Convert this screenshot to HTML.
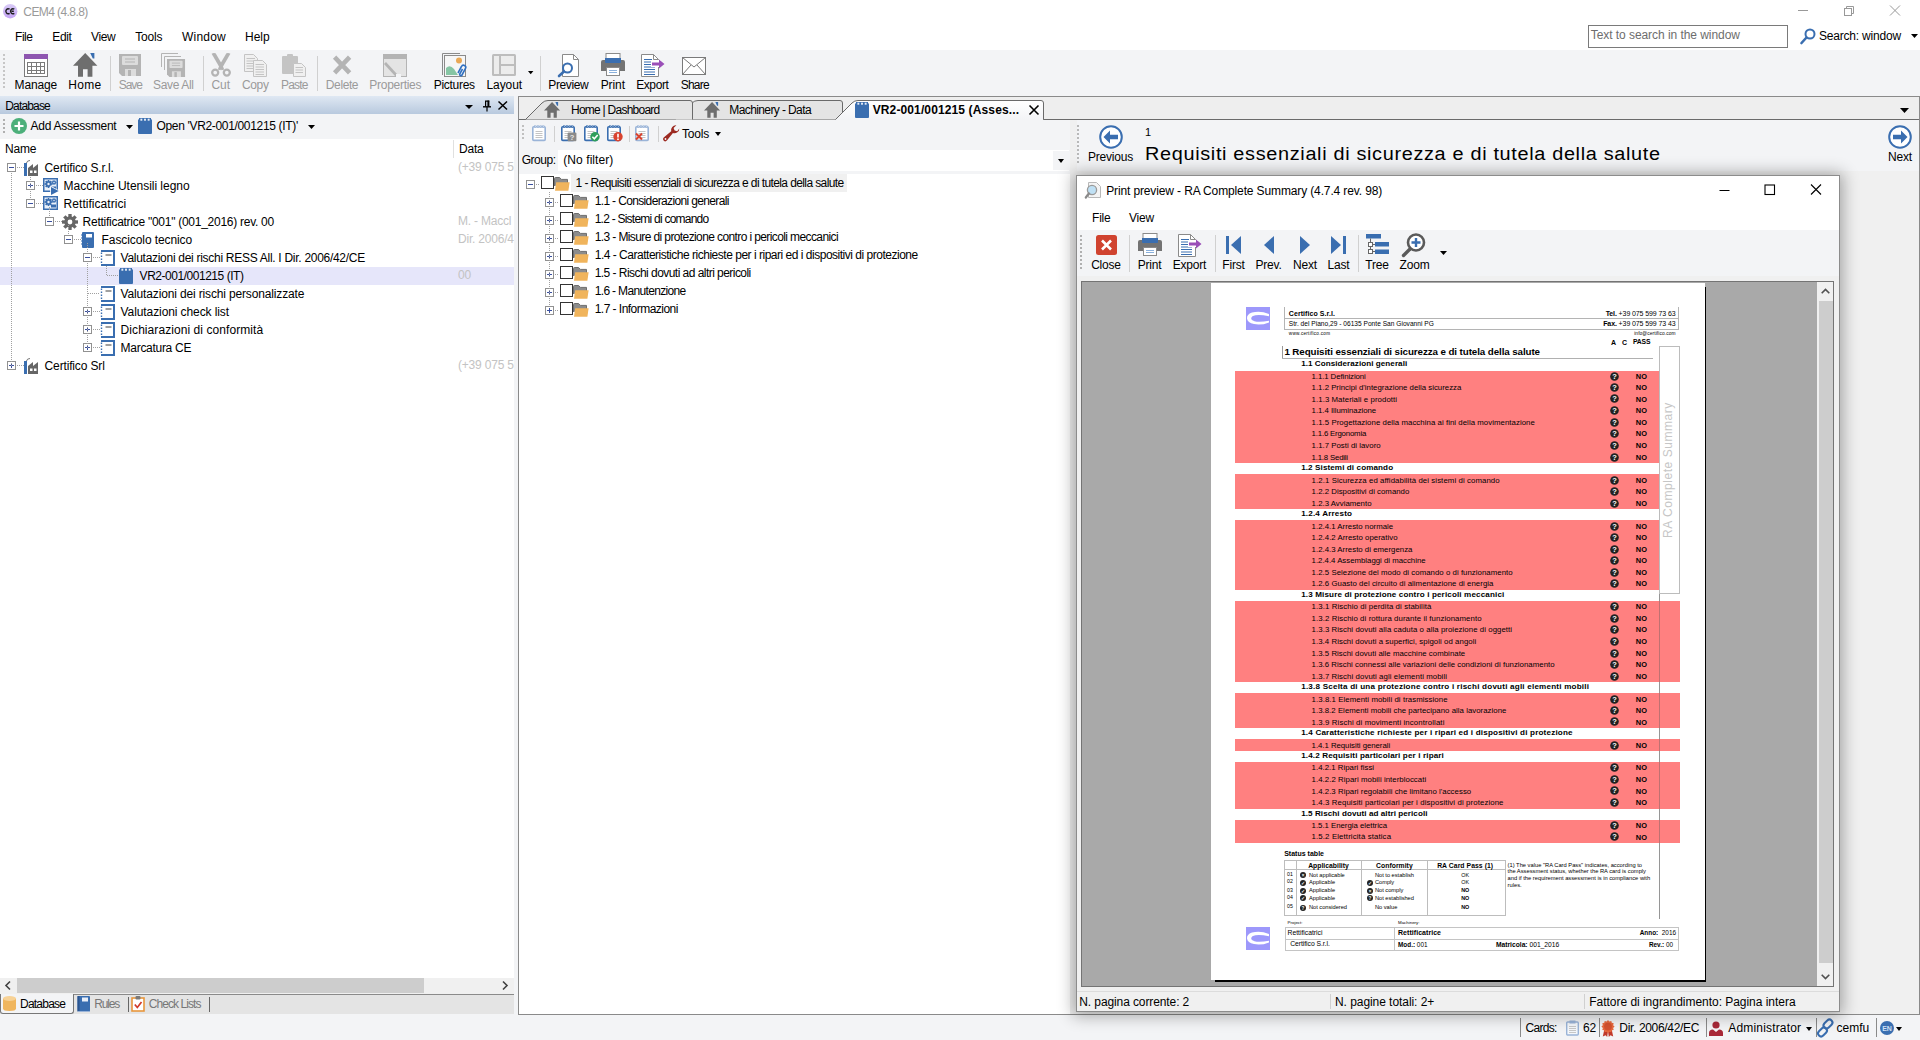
<!DOCTYPE html>
<html><head><meta charset="utf-8"><title>CEM4</title>
<style>
html,body{margin:0;padding:0;}
body{width:1920px;height:1040px;overflow:hidden;position:relative;background:#f3f4f6;font-family:"Liberation Sans", sans-serif;font-size:12px;}
div,span.t,svg{position:absolute;}
span.t{white-space:nowrap;display:block;}
svg{overflow:visible;}
</style></head><body>
<div style="left:0px;top:0px;width:1920px;height:50px;background:#fff"></div>
<svg style="left:2.9px;top:3.6px" width="15" height="15" viewBox="0 0 15 15"><defs><linearGradient id="ga" x1="0" y1="0" x2="0" y2="1"><stop offset="0" stop-color="#d8caf6"/><stop offset="1" stop-color="#c4a4f4"/></linearGradient></defs><circle cx="7.2" cy="7.2" r="7.2" fill="url(#ga)"/><path d="M6.6 5.1 A2.5 2.5 0 1 0 6.6 9.4" fill="none" stroke="#1c1c1c" stroke-width="1.5"/><path d="M11.3 5.1 A2.5 2.5 0 1 0 11.3 9.4 M8.6 7.25 H10.8" fill="none" stroke="#1c1c1c" stroke-width="1.5"/></svg>
<span class="t" style="left:23.3px;top:4.0px;height:17px;line-height:17px;font-size:12px;color:#9a9a9a;letter-spacing:-0.578px;font-weight:normal;">CEM4 (4.8.8)</span>
<svg style="left:1798px;top:5px" width="110" height="14" viewBox="0 0 110 14"><path d="M0 5.5h10" stroke="#999"/><rect x="46.5" y="3.5" width="7" height="7" fill="#fff" stroke="#999"/><path d="M48.5 3.5v-2h7v7h-2" fill="none" stroke="#999"/><path d="M92 0.5l10 10M102 0.5l-10 10" stroke="#999"/></svg>
<span class="t" style="left:15px;top:28.5px;height:17px;line-height:17px;font-size:12px;color:#000;letter-spacing:-0.448px;font-weight:normal;">File</span>
<span class="t" style="left:52.3px;top:28.5px;height:17px;line-height:17px;font-size:12px;color:#000;letter-spacing:-0.396px;font-weight:normal;">Edit</span>
<span class="t" style="left:91px;top:28.5px;height:17px;line-height:17px;font-size:12px;color:#000;letter-spacing:-0.399px;font-weight:normal;">View</span>
<span class="t" style="left:135.2px;top:28.5px;height:17px;line-height:17px;font-size:12px;color:#000;letter-spacing:-0.204px;font-weight:normal;">Tools</span>
<span class="t" style="left:182px;top:28.5px;height:17px;line-height:17px;font-size:12px;color:#000;letter-spacing:0.222px;font-weight:normal;">Window</span>
<span class="t" style="left:245px;top:28.5px;height:17px;line-height:17px;font-size:12px;color:#000;letter-spacing:0.004px;font-weight:normal;">Help</span>
<div style="left:1588px;top:25px;width:198px;height:21px;border:1px solid #7a7a7a;background:#fff"></div>
<span class="t" style="left:1590.7px;top:26.799999999999997px;height:17px;line-height:17px;font-size:12px;color:#6d6d6d;letter-spacing:-0.054px;font-weight:normal;">Text to search in the window</span>
<svg style="left:1800px;top:28px" width="16" height="17" viewBox="0 0 16 17"><circle cx="10" cy="6" r="4.5" fill="none" stroke="#3a6eb0" stroke-width="2"/><path d="M6.5 9.5 L1.5 15" stroke="#3a6eb0" stroke-width="2.6" stroke-linecap="round"/></svg>
<span class="t" style="left:1819px;top:27.5px;height:17px;line-height:17px;font-size:12px;color:#000;letter-spacing:-0.2px;font-weight:normal;">Search: window</span>
<svg style="left:1911px;top:34px" width="7" height="4" viewBox="0 0 7 4"><path d="M0 0h7l-3.5 4z" fill="#000"/></svg>
<div style="left:0px;top:50px;width:1920px;height:46px;background:#f3f4f6"></div>
<svg style="left:3px;top:54px" width="2" height="36" viewBox="0 0 2 36"><rect x="0" y="0" width="2" height="2" fill="#c6c6c6"/><rect x="0" y="4" width="2" height="2" fill="#c6c6c6"/><rect x="0" y="8" width="2" height="2" fill="#c6c6c6"/><rect x="0" y="12" width="2" height="2" fill="#c6c6c6"/><rect x="0" y="16" width="2" height="2" fill="#c6c6c6"/><rect x="0" y="20" width="2" height="2" fill="#c6c6c6"/><rect x="0" y="24" width="2" height="2" fill="#c6c6c6"/><rect x="0" y="28" width="2" height="2" fill="#c6c6c6"/><rect x="0" y="32" width="2" height="2" fill="#c6c6c6"/></svg>
<svg style="left:24px;top:54px" width="24" height="23" viewBox="0 0 24 23"><rect x="0.5" y="0.5" width="23" height="22" fill="#fff" stroke="#7a7a7a"/><rect x="0" y="0" width="24" height="5" fill="#8e56b0"/><g stroke="#7a7a7a" stroke-width="1" fill="none"><rect x="3.5" y="8.5" width="17" height="11"/><path d="M3.5 12.5h17M3.5 16.5h17M7.5 8.5v11M12.5 8.5v11M16.5 8.5v11"/></g></svg>
<span class="t" style="left:-64.2px;width:200px;text-align:center;top:76.5px;height:17px;line-height:17px;font-size:12px;color:#000;letter-spacing:-0.135px;font-weight:normal;">Manage</span>
<svg style="left:73px;top:53px" width="24" height="23" viewBox="0 0 24 23"><g transform="scale(1.0)"><path d="M12.2 0 L0 12.8 H5 V23.7 H10 V16.2 H14.6 V23.7 H19.4 V12.8 H24.4 Z" fill="#6e6e6e"/><path d="M17.2 0 H21.4 V5.6 H19.8 Z" fill="#3a6eb0"/></g></svg>
<span class="t" style="left:-15.200000000000003px;width:200px;text-align:center;top:76.5px;height:17px;line-height:17px;font-size:12px;color:#000;letter-spacing:0.261px;font-weight:normal;">Home</span>
<div style="left:110px;top:56px;width:1px;height:35px;background:#d0d0d0"></div>
<svg style="left:119px;top:54px" width="22" height="22" viewBox="0 0 22 22"><path d="M0 0 H22 V22 H3 L0 19 Z" fill="#b4b4b4"/><rect x="3" y="2" width="16" height="9" rx="1" fill="#dcdcdc"/><path d="M6 5h10M6 8h10" stroke="#b4b4b4" stroke-width="1"/><rect x="6" y="15" width="11" height="7" fill="#dcdcdc"/><rect x="9" y="16" width="3" height="6" fill="#b4b4b4"/></svg>
<span class="t" style="left:30.30000000000001px;width:200px;text-align:center;top:76.5px;height:17px;line-height:17px;font-size:12px;color:#9a9a9a;letter-spacing:-1.12px;font-weight:normal;">Save</span>
<svg style="left:161px;top:53px" width="24" height="24" viewBox="0 0 24 24"><g fill="none" stroke="#b4b4b4"><path d="M0.5 14 V0.5 H17"/><path d="M3.5 17 V3.5 H20"/></g><g transform="translate(6,6) scale(0.82)"><path d="M0 0 H22 V22 H3 L0 19 Z" fill="#b4b4b4"/><rect x="3" y="2" width="16" height="9" rx="1" fill="#dcdcdc"/><path d="M6 5h10M6 8h10" stroke="#b4b4b4" stroke-width="1"/><rect x="6" y="15" width="11" height="7" fill="#dcdcdc"/><rect x="9" y="16" width="3" height="6" fill="#b4b4b4"/></g></svg>
<span class="t" style="left:73.30000000000001px;width:200px;text-align:center;top:76.5px;height:17px;line-height:17px;font-size:12px;color:#9a9a9a;letter-spacing:-0.366px;font-weight:normal;">Save All</span>
<div style="left:203px;top:56px;width:1px;height:35px;background:#d0d0d0"></div>
<svg style="left:211px;top:53px" width="20" height="23" viewBox="0 0 20 23"><path d="M0.6 0.8 Q2.5 -0.5 4.6 0.3 L11.2 11.5 L13.2 16.5 L10.6 17.2 L8 13.5 Z" fill="#b4b4b4"/><path d="M19.4 0.8 Q17.5 -0.5 15.4 0.3 L8.8 11.5 L6.8 16.5 L9.4 17.2 L12 13.5 Z" fill="#b4b4b4"/><circle cx="4.2" cy="19.6" r="3" fill="none" stroke="#b4b4b4" stroke-width="2.3"/><circle cx="15.8" cy="19.6" r="3" fill="none" stroke="#b4b4b4" stroke-width="2.3"/></svg>
<span class="t" style="left:120.80000000000001px;width:200px;text-align:center;top:76.5px;height:17px;line-height:17px;font-size:12px;color:#9a9a9a;letter-spacing:0.006px;font-weight:normal;">Cut</span>
<svg style="left:244px;top:54px" width="23" height="23" viewBox="0 0 23 23"><path d="M0.5 0.5 H9.5 L13.5 4.5 V17.5 H0.5 Z" fill="#f0f0f0" stroke="#c4c4c4"/><path d="M2.5 4.5 H11" stroke="#c4c4c4" stroke-width="1"/><path d="M2.5 7.0 H11" stroke="#c4c4c4" stroke-width="1"/><path d="M2.5 9.5 H11" stroke="#c4c4c4" stroke-width="1"/><path d="M2.5 12.0 H11" stroke="#c4c4c4" stroke-width="1"/><path d="M2.5 14.5 H11" stroke="#c4c4c4" stroke-width="1"/><path d="M9.5 6.5 H18.5 L22.5 10.5 V22.5 H9.5 Z" fill="#f0f0f0" stroke="#c4c4c4"/><path d="M11.5 10.5 H20" stroke="#c4c4c4" stroke-width="1"/><path d="M11.5 13.0 H20" stroke="#c4c4c4" stroke-width="1"/><path d="M11.5 15.5 H20" stroke="#c4c4c4" stroke-width="1"/><path d="M11.5 18.0 H20" stroke="#c4c4c4" stroke-width="1"/><path d="M11.5 20.5 H20" stroke="#c4c4c4" stroke-width="1"/></svg>
<span class="t" style="left:155.3px;width:200px;text-align:center;top:76.5px;height:17px;line-height:17px;font-size:12px;color:#9a9a9a;letter-spacing:-0.339px;font-weight:normal;">Copy</span>
<svg style="left:282px;top:54px" width="24" height="23" viewBox="0 0 24 23"><rect x="0" y="2" width="16" height="18" rx="1" fill="#c4c4c4"/><rect x="5" y="0" width="6" height="4" rx="1" fill="#c4c4c4"/><path d="M11.5 9.5 H19.5 L23.5 13.5 V22.5 H11.5 Z" fill="#f0f0f0" stroke="#c4c4c4"/><path d="M13.5 13.5 H21" stroke="#c4c4c4" stroke-width="1"/><path d="M13.5 16.0 H21" stroke="#c4c4c4" stroke-width="1"/><path d="M13.5 18.5 H21" stroke="#c4c4c4" stroke-width="1"/></svg>
<span class="t" style="left:194.3px;width:200px;text-align:center;top:76.5px;height:17px;line-height:17px;font-size:12px;color:#9a9a9a;letter-spacing:-0.797px;font-weight:normal;">Paste</span>
<div style="left:317px;top:56px;width:1px;height:35px;background:#d0d0d0"></div>
<svg style="left:332px;top:55px" width="20" height="20" viewBox="0 0 20 20"><path d="M2.6 2.2 L17.6 17.8 M17.6 2.2 L2.6 17.8" stroke="#b4b4b4" stroke-width="4.6" fill="none"/></svg>
<span class="t" style="left:242.0px;width:200px;text-align:center;top:76.5px;height:17px;line-height:17px;font-size:12px;color:#9a9a9a;letter-spacing:-0.397px;font-weight:normal;">Delete</span>
<svg style="left:383px;top:54px" width="24" height="23" viewBox="0 0 24 23"><rect x="0.5" y="0.5" width="23" height="22" fill="#e4e4e4" stroke="#b4b4b4"/><rect x="0" y="0" width="24" height="5" fill="#b4b4b4"/><path d="M1 10 L3 8 L14 20 L15 23 L12 22 Z" fill="#b4b4b4"/><rect x="13" y="20" width="5" height="3" fill="#f3f4f6"/></svg>
<span class="t" style="left:295.3px;width:200px;text-align:center;top:76.5px;height:17px;line-height:17px;font-size:12px;color:#9a9a9a;letter-spacing:-0.278px;font-weight:normal;">Properties</span>
<svg style="left:442px;top:53px" width="24" height="24" viewBox="0 0 24 24"><path d="M0.5 22 V0.5 H18" fill="none" stroke="#8a8a8a"/><rect x="2.5" y="2.5" width="21" height="21" fill="#f6f6f6" stroke="#8a8a8a"/><circle cx="17" cy="7.5" r="3" fill="#e9a855"/><path d="M4 22 V15 Q8 11 12 16 L16 22 Z" fill="#86c5a4"/><g fill="none" stroke="#2f6fc0" stroke-width="1.6"><path d="M16 20 L19.5 13.5 a2.2 2.2 0 0 1 4 2 L20 22 a1.2 1.2 0 0 1 -2.2 -1.2 L20.5 16"/></g></svg>
<span class="t" style="left:354.3px;width:200px;text-align:center;top:76.5px;height:17px;line-height:17px;font-size:12px;color:#000;letter-spacing:-0.28px;font-weight:normal;">Pictures</span>
<svg style="left:492px;top:54px" width="24" height="22" viewBox="0 0 24 22"><rect x="0" y="0" width="24" height="22" rx="1.5" fill="#bdbdbd"/><rect x="2" y="2" width="5" height="18" fill="#ececec"/><rect x="9" y="2" width="13" height="8" fill="#ececec"/><rect x="9" y="12" width="13" height="8" fill="#ececec"/></svg>
<span class="t" style="left:404.3px;width:200px;text-align:center;top:76.5px;height:17px;line-height:17px;font-size:12px;color:#000;letter-spacing:-0.066px;font-weight:normal;">Layout</span>
<svg style="left:528px;top:70.5px" width="5" height="3" viewBox="0 0 5 3"><path d="M0 0h5.4l-2.7 3.2z" fill="#000"/></svg>
<div style="left:540px;top:56px;width:1px;height:35px;background:#d0d0d0"></div>
<svg style="left:558px;top:54px" width="22" height="23" viewBox="0 0 22 23"><path d="M4.5 0.5 H15.5 L20.5 5.5 V22.5 H4.5 Z" fill="#fff" stroke="#8a8a8a"/><path d="M15.5 0.5 V5.5 H20.5" fill="none" stroke="#8a8a8a"/><circle cx="9.5" cy="14" r="4.5" fill="#fff" stroke="#3a6eb0" stroke-width="2"/><path d="M6 17.5 L1 22" stroke="#3a6eb0" stroke-width="2.6" stroke-linecap="round"/></svg>
<span class="t" style="left:468.29999999999995px;width:200px;text-align:center;top:76.5px;height:17px;line-height:17px;font-size:12px;color:#000;letter-spacing:-0.381px;font-weight:normal;">Preview</span>
<svg style="left:601px;top:53px" width="24" height="23" viewBox="0 0 24 23"><rect x="5" y="0.5" width="14" height="7" fill="#fff" stroke="#8a8a8a"/><rect x="4" y="5" width="16" height="5" fill="#3a6eb0"/><path d="M0 9 Q0 7 2 7 H22 Q24 7 24 9 V18 H0 Z" fill="#737373"/><rect x="4" y="6" width="16" height="4" rx="1" fill="#3a6eb0"/><rect x="5.5" y="14.5" width="13" height="8" fill="#fff" stroke="#8a8a8a"/><path d="M8 17.5h8M8 19.5h8" stroke="#8ab0dc"/></svg>
<span class="t" style="left:512.8px;width:200px;text-align:center;top:76.5px;height:17px;line-height:17px;font-size:12px;color:#000;letter-spacing:-0.072px;font-weight:normal;">Print</span>
<svg style="left:641px;top:54px" width="24" height="23" viewBox="0 0 24 23"><path d="M0.5 0.5 H12.5 L17.5 5.5 V22.5 H0.5 Z" fill="#fff" stroke="#8a8a8a"/><path d="M12.5 0.5 V5.5 H17.5" fill="none" stroke="#8a8a8a"/><path d="M3 5.5h8M3 8h11M3 10.5h11M3 13h11M3 15.5h11M3 18h11M3 20.5h11" stroke="#3a6eb0" stroke-width="1"/><rect x="10" y="6" width="10" height="7" fill="#fff"/><path d="M11 8.5 H18 V5.5 L23.5 10 L18 14.5 V11.5 H11 Z" fill="#9a4fb8"/></svg>
<span class="t" style="left:552.3px;width:200px;text-align:center;top:76.5px;height:17px;line-height:17px;font-size:12px;color:#000;letter-spacing:-0.397px;font-weight:normal;">Export</span>
<svg style="left:682px;top:57px" width="24" height="18" viewBox="0 0 24 18"><rect x="0.5" y="0.5" width="23" height="17" fill="#fff" stroke="#7a7a7a"/><path d="M0.5 0.5 L12 10 L23.5 0.5 M0.5 17.5 L9 8 M23.5 17.5 L15 8" fill="none" stroke="#7a7a7a"/></svg>
<span class="t" style="left:594.8px;width:200px;text-align:center;top:76.5px;height:17px;line-height:17px;font-size:12px;color:#000;letter-spacing:-0.758px;font-weight:normal;">Share</span>
<div style="left:0px;top:96px;width:514px;height:18px;background:linear-gradient(#dfe8f3,#b8c9de)"></div>
<span class="t" style="left:5.3px;top:97.5px;height:17px;line-height:17px;font-size:12px;color:#000;letter-spacing:-0.839px;font-weight:normal;">Database</span>
<svg style="left:465px;top:105px" width="8" height="4" viewBox="0 0 8 4"><path d="M0 0h8l-4 4z" fill="#000"/></svg>
<svg style="left:483px;top:100px" width="8" height="12" viewBox="0 0 8 12"><path d="M2 1.2h4.2M2.6 1v5.5" stroke="#000" stroke-width="1.2" fill="none"/><path d="M5.4 0.6v6" stroke="#000" stroke-width="2"/><path d="M0 6.8h8" stroke="#000" stroke-width="1.4"/><path d="M4 7v4.5" stroke="#000" stroke-width="1.2"/></svg>
<svg style="left:498px;top:101px" width="10" height="9" viewBox="0 0 10 9"><path d="M0.5 0.5l8.5 8M9 0.5l-8.5 8" stroke="#000" stroke-width="1.5"/></svg>
<div style="left:0px;top:114px;width:514px;height:25px;background:#f3f4f6"></div>
<svg style="left:3px;top:119px" width="2" height="14" viewBox="0 0 2 14"><rect x="0" y="0" width="2" height="2" fill="#b0b0b0"/><rect x="0" y="4" width="2" height="2" fill="#b0b0b0"/><rect x="0" y="8" width="2" height="2" fill="#b0b0b0"/><rect x="0" y="12" width="2" height="2" fill="#b0b0b0"/></svg>
<svg style="left:11px;top:118px" width="16" height="16" viewBox="0 0 16 16"><circle cx="8" cy="8" r="8" fill="#4caf7a"/><path d="M8 3.5V12.5M3.5 8H12.5" stroke="#fff" stroke-width="2.2"/></svg>
<span class="t" style="left:30.5px;top:117.5px;height:17px;line-height:17px;font-size:12px;color:#000;letter-spacing:-0.245px;font-weight:normal;">Add Assessment</span>
<svg style="left:126px;top:125px" width="7" height="4" viewBox="0 0 7 4"><path d="M0 0h7l-3.5 4z" fill="#000"/></svg>
<svg style="left:138px;top:118px" width="14" height="16" viewBox="0 0 14 16"><rect x="0" y="1.2" width="14" height="14.8" rx="1" fill="#3a6eb0"/><rect x="1" y="0" width="12" height="3" fill="#3a6eb0"/><rect x="2.4" y="0.7" width="1.9" height="2" fill="#e8eef8"/><rect x="6.05" y="0.7" width="1.9" height="2" fill="#e8eef8"/><rect x="9.7" y="0.7" width="1.9" height="2" fill="#e8eef8"/></svg>
<span class="t" style="left:156.5px;top:117.5px;height:17px;line-height:17px;font-size:12px;color:#000;letter-spacing:-0.332px;font-weight:normal;">Open 'VR2-001/001215 (IT)'</span>
<svg style="left:308px;top:125px" width="7" height="4" viewBox="0 0 7 4"><path d="M0 0h7l-3.5 4z" fill="#000"/></svg>
<div style="left:0px;top:139px;width:514px;height:856px;background:#fff"></div>
<span class="t" style="left:5px;top:140.5px;height:17px;line-height:17px;font-size:12px;color:#000;letter-spacing:-0.2px;font-weight:normal;">Name</span>
<div style="left:453px;top:140px;width:1px;height:18px;background:#e0e0e0"></div>
<span class="t" style="left:459px;top:140.5px;height:17px;line-height:17px;font-size:12px;color:#000;letter-spacing:-0.2px;font-weight:normal;">Data</span>
<svg style="left:7px;top:163px" width="9" height="9" viewBox="0 0 9 9"><rect x="0.5" y="0.5" width="8" height="8" fill="#fff" stroke="#919191"/><path d="M2 4.5h5" stroke="#3a50a0"/></svg>
<svg style="left:17px;top:167px" width="7" height="1" viewBox="0 0 7 1"><path d="M0 0.5H7" stroke="#a0a0a0" stroke-dasharray="1 1"/></svg>
<svg style="left:24px;top:160px" width="15" height="16" viewBox="0 0 15 16"><rect x="0" y="3" width="3" height="13" fill="#3a6eb0"/><path d="M2.5 3 Q3 0.5 6 0.5" stroke="#777" fill="none"/><path d="M4 16 V8 L9 4 V8 L14 4 V16 Z" fill="#666"/><rect x="6" y="10.5" width="2.5" height="2.5" fill="#fff"/><rect x="10" y="10.5" width="2.5" height="2.5" fill="#fff"/></svg>
<span class="t" style="left:44.6px;top:160.0px;height:17px;line-height:17px;font-size:12px;color:#000;letter-spacing:-0.144px;font-weight:normal;">Certifico S.r.l.</span>
<div style="left:453px;top:159px;width:61px;height:18px;overflow:hidden"><span class="t" style="left:5px;top:0;line-height:17px;color:#c3c3c3;letter-spacing:-0.2px">(+39 075 59</span></div>
<svg style="left:26px;top:181px" width="9" height="9" viewBox="0 0 9 9"><rect x="0.5" y="0.5" width="8" height="8" fill="#fff" stroke="#919191"/><path d="M2 4.5h5" stroke="#3a50a0"/><path d="M4.5 2v5" stroke="#3a50a0"/></svg>
<svg style="left:36px;top:185px" width="7" height="1" viewBox="0 0 7 1"><path d="M0 0.5H7" stroke="#a0a0a0" stroke-dasharray="1 1"/></svg>
<svg style="left:43px;top:178px" width="16" height="16" viewBox="0 0 16 16"><rect x="0.75" y="0.75" width="13.5" height="12.5" fill="#eaf1fa" stroke="#3a6eb0" stroke-width="1.5"/><path d="M7.70 6.00 L9.50 6.00" stroke="#3a6eb0" stroke-width="1.68"/><path d="M7.06 7.56 L8.33 8.83" stroke="#3a6eb0" stroke-width="1.68"/><path d="M5.50 8.20 L5.50 10.00" stroke="#3a6eb0" stroke-width="1.68"/><path d="M3.94 7.56 L2.67 8.83" stroke="#3a6eb0" stroke-width="1.68"/><path d="M3.30 6.00 L1.50 6.00" stroke="#3a6eb0" stroke-width="1.68"/><path d="M3.94 4.44 L2.67 3.17" stroke="#3a6eb0" stroke-width="1.68"/><path d="M5.50 3.80 L5.50 2.00" stroke="#3a6eb0" stroke-width="1.68"/><path d="M7.06 4.44 L8.33 3.17" stroke="#3a6eb0" stroke-width="1.68"/><circle cx="5.5" cy="6" r="2.88" fill="#3a6eb0"/><circle cx="5.5" cy="6" r="1.20" fill="#eaf1fa"/><path d="M12.32 4.50 L13.40 4.50" stroke="#3a6eb0" stroke-width="1.01"/><path d="M11.93 5.43 L12.70 6.20" stroke="#3a6eb0" stroke-width="1.01"/><path d="M11.00 5.82 L11.00 6.90" stroke="#3a6eb0" stroke-width="1.01"/><path d="M10.07 5.43 L9.30 6.20" stroke="#3a6eb0" stroke-width="1.01"/><path d="M9.68 4.50 L8.60 4.50" stroke="#3a6eb0" stroke-width="1.01"/><path d="M10.07 3.57 L9.30 2.80" stroke="#3a6eb0" stroke-width="1.01"/><path d="M11.00 3.18 L11.00 2.10" stroke="#3a6eb0" stroke-width="1.01"/><path d="M11.93 3.57 L12.70 2.80" stroke="#3a6eb0" stroke-width="1.01"/><circle cx="11" cy="4.5" r="1.73" fill="#3a6eb0"/><circle cx="11" cy="4.5" r="0.72" fill="#eaf1fa"/><rect x="8" y="8.5" width="5" height="3" fill="#3a6eb0"/><path d="M7.2 7.6 L17 13 L7.2 18.2 Z" fill="#fff"/><path d="M8 8.9 L15.7 13 L8 17 Z" fill="#3a6eb0"/></svg>
<span class="t" style="left:63.6px;top:178.0px;height:17px;line-height:17px;font-size:12px;color:#000;letter-spacing:-0.033px;font-weight:normal;">Macchine Utensili legno</span>
<svg style="left:26px;top:199px" width="9" height="9" viewBox="0 0 9 9"><rect x="0.5" y="0.5" width="8" height="8" fill="#fff" stroke="#919191"/><path d="M2 4.5h5" stroke="#3a50a0"/></svg>
<svg style="left:36px;top:203px" width="7" height="1" viewBox="0 0 7 1"><path d="M0 0.5H7" stroke="#a0a0a0" stroke-dasharray="1 1"/></svg>
<svg style="left:43px;top:196px" width="15" height="14" viewBox="0 0 15 14"><rect x="0.75" y="0.75" width="13.5" height="12.5" fill="#eaf1fa" stroke="#3a6eb0" stroke-width="1.5"/><path d="M7.70 6.00 L9.50 6.00" stroke="#3a6eb0" stroke-width="1.68"/><path d="M7.06 7.56 L8.33 8.83" stroke="#3a6eb0" stroke-width="1.68"/><path d="M5.50 8.20 L5.50 10.00" stroke="#3a6eb0" stroke-width="1.68"/><path d="M3.94 7.56 L2.67 8.83" stroke="#3a6eb0" stroke-width="1.68"/><path d="M3.30 6.00 L1.50 6.00" stroke="#3a6eb0" stroke-width="1.68"/><path d="M3.94 4.44 L2.67 3.17" stroke="#3a6eb0" stroke-width="1.68"/><path d="M5.50 3.80 L5.50 2.00" stroke="#3a6eb0" stroke-width="1.68"/><path d="M7.06 4.44 L8.33 3.17" stroke="#3a6eb0" stroke-width="1.68"/><circle cx="5.5" cy="6" r="2.88" fill="#3a6eb0"/><circle cx="5.5" cy="6" r="1.20" fill="#eaf1fa"/><path d="M12.32 4.50 L13.40 4.50" stroke="#3a6eb0" stroke-width="1.01"/><path d="M11.93 5.43 L12.70 6.20" stroke="#3a6eb0" stroke-width="1.01"/><path d="M11.00 5.82 L11.00 6.90" stroke="#3a6eb0" stroke-width="1.01"/><path d="M10.07 5.43 L9.30 6.20" stroke="#3a6eb0" stroke-width="1.01"/><path d="M9.68 4.50 L8.60 4.50" stroke="#3a6eb0" stroke-width="1.01"/><path d="M10.07 3.57 L9.30 2.80" stroke="#3a6eb0" stroke-width="1.01"/><path d="M11.00 3.18 L11.00 2.10" stroke="#3a6eb0" stroke-width="1.01"/><path d="M11.93 3.57 L12.70 2.80" stroke="#3a6eb0" stroke-width="1.01"/><circle cx="11" cy="4.5" r="1.73" fill="#3a6eb0"/><circle cx="11" cy="4.5" r="0.72" fill="#eaf1fa"/><rect x="8" y="8.5" width="5" height="3" fill="#3a6eb0"/></svg>
<span class="t" style="left:63.6px;top:196.0px;height:17px;line-height:17px;font-size:12px;color:#000;letter-spacing:0.037px;font-weight:normal;">Rettificatrici</span>
<svg style="left:45px;top:217px" width="9" height="9" viewBox="0 0 9 9"><rect x="0.5" y="0.5" width="8" height="8" fill="#fff" stroke="#919191"/><path d="M2 4.5h5" stroke="#3a50a0"/></svg>
<svg style="left:55px;top:221px" width="7" height="1" viewBox="0 0 7 1"><path d="M0 0.5H7" stroke="#a0a0a0" stroke-dasharray="1 1"/></svg>
<svg style="left:62px;top:214px" width="16" height="16" viewBox="0 0 16 16"><path d="M12.40 8.00 L16.00 8.00" stroke="#666" stroke-width="3.36"/><path d="M11.11 11.11 L13.66 13.66" stroke="#666" stroke-width="3.36"/><path d="M8.00 12.40 L8.00 16.00" stroke="#666" stroke-width="3.36"/><path d="M4.89 11.11 L2.34 13.66" stroke="#666" stroke-width="3.36"/><path d="M3.60 8.00 L0.00 8.00" stroke="#666" stroke-width="3.36"/><path d="M4.89 4.89 L2.34 2.34" stroke="#666" stroke-width="3.36"/><path d="M8.00 3.60 L8.00 0.00" stroke="#666" stroke-width="3.36"/><path d="M11.11 4.89 L13.66 2.34" stroke="#666" stroke-width="3.36"/><circle cx="8" cy="8" r="5.76" fill="#666"/><circle cx="8" cy="8" r="2.40" fill="#fff"/></svg>
<span class="t" style="left:82.6px;top:214.0px;height:17px;line-height:17px;font-size:12px;color:#000;letter-spacing:-0.267px;font-weight:normal;">Rettificatrice "001" (001_2016) rev. 00</span>
<div style="left:453px;top:213px;width:61px;height:18px;overflow:hidden"><span class="t" style="left:5px;top:0;line-height:17px;color:#c3c3c3;letter-spacing:-0.2px">M. - Maccl</span></div>
<svg style="left:64px;top:235px" width="9" height="9" viewBox="0 0 9 9"><rect x="0.5" y="0.5" width="8" height="8" fill="#fff" stroke="#919191"/><path d="M2 4.5h5" stroke="#3a50a0"/></svg>
<svg style="left:74px;top:239px" width="7" height="1" viewBox="0 0 7 1"><path d="M0 0.5H7" stroke="#a0a0a0" stroke-dasharray="1 1"/></svg>
<svg style="left:81px;top:232px" width="13" height="16" viewBox="0 0 13 16"><rect x="1" y="0" width="12" height="16" rx="1" fill="#3a6eb0"/><rect x="5" y="2" width="6" height="3.5" fill="#fff"/><path d="M0 3h2M0 6h2M0 9h2M0 12h2" stroke="#3a6eb0" stroke-width="1.2"/></svg>
<span class="t" style="left:101.6px;top:232.0px;height:17px;line-height:17px;font-size:12px;color:#000;letter-spacing:-0.09px;font-weight:normal;">Fascicolo tecnico</span>
<div style="left:453px;top:231px;width:61px;height:18px;overflow:hidden"><span class="t" style="left:5px;top:0;line-height:17px;color:#c3c3c3;letter-spacing:-0.2px">Dir. 2006/4</span></div>
<svg style="left:83px;top:253px" width="9" height="9" viewBox="0 0 9 9"><rect x="0.5" y="0.5" width="8" height="8" fill="#fff" stroke="#919191"/><path d="M2 4.5h5" stroke="#3a50a0"/></svg>
<svg style="left:93px;top:257px" width="7" height="1" viewBox="0 0 7 1"><path d="M0 0.5H7" stroke="#a0a0a0" stroke-dasharray="1 1"/></svg>
<svg style="left:100px;top:250px" width="15" height="16" viewBox="0 0 15 16"><rect x="2" y="1" width="12" height="14" fill="#fff" stroke="#3a6eb0" stroke-width="2"/><rect x="1" y="2" width="2" height="12" fill="#fff"/><path d="M5.5 5h6" stroke="#888" stroke-width="1.6"/><path d="M1.5 2.5v11.5" stroke="#3a6eb0" stroke-width="1.4" stroke-dasharray="1.6 1.4"/></svg>
<span class="t" style="left:120.6px;top:250.0px;height:17px;line-height:17px;font-size:12px;color:#000;letter-spacing:-0.285px;font-weight:normal;">Valutazioni dei rischi RESS All. I Dir. 2006/42/CE</span>
<div style="left:0px;top:267px;width:514px;height:18px;background:#e6e6fa"></div>
<svg style="left:107px;top:275px" width="12" height="1" viewBox="0 0 12 1"><path d="M0 0.5H12" stroke="#a0a0a0" stroke-dasharray="1 1"/></svg>
<svg style="left:119px;top:268px" width="14" height="16" viewBox="0 0 14 16"><rect x="0" y="1.2" width="14" height="14.8" rx="1" fill="#3a6eb0"/><rect x="1" y="0" width="12" height="3" fill="#3a6eb0"/><rect x="2.4" y="0.7" width="1.9" height="2" fill="#e8eef8"/><rect x="6.05" y="0.7" width="1.9" height="2" fill="#e8eef8"/><rect x="9.7" y="0.7" width="1.9" height="2" fill="#e8eef8"/></svg>
<span class="t" style="left:139.6px;top:268.0px;height:17px;line-height:17px;font-size:12px;color:#000;letter-spacing:-0.469px;font-weight:normal;">VR2-001/001215 (IT)</span>
<div style="left:453px;top:267px;width:61px;height:18px;overflow:hidden"><span class="t" style="left:5px;top:0;line-height:17px;color:#c3c3c3;letter-spacing:-0.2px">00</span></div>
<svg style="left:88px;top:293px" width="12" height="1" viewBox="0 0 12 1"><path d="M0 0.5H12" stroke="#a0a0a0" stroke-dasharray="1 1"/></svg>
<svg style="left:100px;top:286px" width="15" height="16" viewBox="0 0 15 16"><rect x="2" y="1" width="12" height="14" fill="#fff" stroke="#3a6eb0" stroke-width="2"/><rect x="1" y="2" width="2" height="12" fill="#fff"/><path d="M5.5 5h6" stroke="#888" stroke-width="1.6"/><path d="M1.5 2.5v11.5" stroke="#3a6eb0" stroke-width="1.4" stroke-dasharray="1.6 1.4"/></svg>
<span class="t" style="left:120.6px;top:286.0px;height:17px;line-height:17px;font-size:12px;color:#000;letter-spacing:-0.151px;font-weight:normal;">Valutazioni dei rischi personalizzate</span>
<svg style="left:83px;top:307px" width="9" height="9" viewBox="0 0 9 9"><rect x="0.5" y="0.5" width="8" height="8" fill="#fff" stroke="#919191"/><path d="M2 4.5h5" stroke="#3a50a0"/><path d="M4.5 2v5" stroke="#3a50a0"/></svg>
<svg style="left:93px;top:311px" width="7" height="1" viewBox="0 0 7 1"><path d="M0 0.5H7" stroke="#a0a0a0" stroke-dasharray="1 1"/></svg>
<svg style="left:100px;top:304px" width="15" height="16" viewBox="0 0 15 16"><rect x="2" y="1" width="12" height="14" fill="#fff" stroke="#3a6eb0" stroke-width="2"/><rect x="1" y="2" width="2" height="12" fill="#fff"/><path d="M5.5 5h6" stroke="#888" stroke-width="1.6"/><path d="M1.5 2.5v11.5" stroke="#3a6eb0" stroke-width="1.4" stroke-dasharray="1.6 1.4"/></svg>
<span class="t" style="left:120.6px;top:304.0px;height:17px;line-height:17px;font-size:12px;color:#000;letter-spacing:-0.095px;font-weight:normal;">Valutazioni check list</span>
<svg style="left:83px;top:325px" width="9" height="9" viewBox="0 0 9 9"><rect x="0.5" y="0.5" width="8" height="8" fill="#fff" stroke="#919191"/><path d="M2 4.5h5" stroke="#3a50a0"/><path d="M4.5 2v5" stroke="#3a50a0"/></svg>
<svg style="left:93px;top:329px" width="7" height="1" viewBox="0 0 7 1"><path d="M0 0.5H7" stroke="#a0a0a0" stroke-dasharray="1 1"/></svg>
<svg style="left:100px;top:322px" width="15" height="16" viewBox="0 0 15 16"><rect x="2" y="1" width="12" height="14" fill="#fff" stroke="#3a6eb0" stroke-width="2"/><rect x="1" y="2" width="2" height="12" fill="#fff"/><path d="M5.5 5h6" stroke="#888" stroke-width="1.6"/><path d="M1.5 2.5v11.5" stroke="#3a6eb0" stroke-width="1.4" stroke-dasharray="1.6 1.4"/></svg>
<span class="t" style="left:120.6px;top:322.0px;height:17px;line-height:17px;font-size:12px;color:#000;letter-spacing:0.068px;font-weight:normal;">Dichiarazioni di conformità</span>
<svg style="left:83px;top:343px" width="9" height="9" viewBox="0 0 9 9"><rect x="0.5" y="0.5" width="8" height="8" fill="#fff" stroke="#919191"/><path d="M2 4.5h5" stroke="#3a50a0"/><path d="M4.5 2v5" stroke="#3a50a0"/></svg>
<svg style="left:93px;top:347px" width="7" height="1" viewBox="0 0 7 1"><path d="M0 0.5H7" stroke="#a0a0a0" stroke-dasharray="1 1"/></svg>
<svg style="left:100px;top:340px" width="15" height="16" viewBox="0 0 15 16"><rect x="2" y="1" width="12" height="14" fill="#fff" stroke="#3a6eb0" stroke-width="2"/><rect x="1" y="2" width="2" height="12" fill="#fff"/><path d="M5.5 5h6" stroke="#888" stroke-width="1.6"/><path d="M1.5 2.5v11.5" stroke="#3a6eb0" stroke-width="1.4" stroke-dasharray="1.6 1.4"/></svg>
<span class="t" style="left:120.6px;top:340.0px;height:17px;line-height:17px;font-size:12px;color:#000;letter-spacing:-0.294px;font-weight:normal;">Marcatura CE</span>
<svg style="left:7px;top:361px" width="9" height="9" viewBox="0 0 9 9"><rect x="0.5" y="0.5" width="8" height="8" fill="#fff" stroke="#919191"/><path d="M2 4.5h5" stroke="#3a50a0"/><path d="M4.5 2v5" stroke="#3a50a0"/></svg>
<svg style="left:17px;top:365px" width="7" height="1" viewBox="0 0 7 1"><path d="M0 0.5H7" stroke="#a0a0a0" stroke-dasharray="1 1"/></svg>
<svg style="left:24px;top:358px" width="15" height="16" viewBox="0 0 15 16"><rect x="0" y="3" width="3" height="13" fill="#3a6eb0"/><path d="M2.5 3 Q3 0.5 6 0.5" stroke="#777" fill="none"/><path d="M4 16 V8 L9 4 V8 L14 4 V16 Z" fill="#666"/><rect x="6" y="10.5" width="2.5" height="2.5" fill="#fff"/><rect x="10" y="10.5" width="2.5" height="2.5" fill="#fff"/></svg>
<span class="t" style="left:44.6px;top:358.0px;height:17px;line-height:17px;font-size:12px;color:#000;letter-spacing:-0.151px;font-weight:normal;">Certifico Srl</span>
<div style="left:453px;top:357px;width:61px;height:18px;overflow:hidden"><span class="t" style="left:5px;top:0;line-height:17px;color:#c3c3c3;letter-spacing:-0.2px">(+39 075 59</span></div>
<svg style="left:11px;top:173px" width="1" height="193" viewBox="0 0 1 193"><path d="M0.5 0V193" stroke="#a0a0a0" stroke-dasharray="1 1"/></svg>
<svg style="left:30px;top:177px" width="1" height="23" viewBox="0 0 1 23"><path d="M0.5 0V23" stroke="#a0a0a0" stroke-dasharray="1 1"/></svg>
<svg style="left:49px;top:207px" width="1" height="10" viewBox="0 0 1 10"><path d="M0.5 0V10" stroke="#a0a0a0" stroke-dasharray="1 1"/></svg>
<svg style="left:68px;top:225px" width="1" height="10" viewBox="0 0 1 10"><path d="M0.5 0V10" stroke="#a0a0a0" stroke-dasharray="1 1"/></svg>
<svg style="left:87px;top:243px" width="1" height="10" viewBox="0 0 1 10"><path d="M0.5 0V10" stroke="#a0a0a0" stroke-dasharray="1 1"/></svg>
<svg style="left:87px;top:263px" width="1" height="85" viewBox="0 0 1 85"><path d="M0.5 0V85" stroke="#a0a0a0" stroke-dasharray="1 1"/></svg>
<svg style="left:106px;top:266px" width="1" height="10" viewBox="0 0 1 10"><path d="M0.5 0V10" stroke="#a0a0a0" stroke-dasharray="1 1"/></svg>
<div style="left:0px;top:978px;width:514px;height:16px;background:#f0f0f0"></div>
<div style="left:17px;top:978px;width:407px;height:15px;background:#cdcdcd"></div>
<svg style="left:5px;top:981px" width="6" height="9" viewBox="0 0 6 9"><path d="M5 0.5L1 4.5L5 8.5" fill="none" stroke="#404040" stroke-width="1.6"/></svg>
<svg style="left:502px;top:981px" width="6" height="9" viewBox="0 0 6 9"><path d="M1 0.5L5 4.5L1 8.5" fill="none" stroke="#404040" stroke-width="1.6"/></svg>
<div style="left:0px;top:994px;width:514px;height:20px;background:#e4e4e4;border-top:1px solid #8a8a8a;box-sizing:border-box"></div>
<div style="left:0px;top:994px;width:74px;height:20px;background:#f3f4f6;border:1px solid #777;border-top:none;border-radius:0 0 3px 3px;box-sizing:border-box"></div>
<svg style="left:3px;top:996px" width="13" height="15" viewBox="0 0 13 15"><path d="M0 2.5 V12.5 Q0 15 6.5 15 Q13 15 13 12.5 V2.5 Z" fill="#f0b65e"/><ellipse cx="6.5" cy="2.5" rx="6.5" ry="2.5" fill="#f7d296"/></svg>
<span class="t" style="left:20px;top:996.0px;height:17px;line-height:17px;font-size:12px;color:#000;letter-spacing:-0.768px;font-weight:normal;">Database</span>
<svg style="left:77px;top:996px" width="13" height="16" viewBox="0 0 13 16"><rect x="0.5" y="0" width="12.5" height="15.5" rx="1" fill="#3a6eb0"/><rect x="0.5" y="0" width="2" height="15.5" fill="#2b5590"/><rect x="5" y="1.5" width="6" height="4" fill="#e8eef8"/><path d="M1 15.5h12" stroke="#9ab4d8"/></svg>
<span class="t" style="left:94.3px;top:996.0px;height:17px;line-height:17px;font-size:12px;color:#777;letter-spacing:-1.172px;font-weight:normal;">Rules</span>
<svg style="left:131px;top:996px" width="14" height="16" viewBox="0 0 14 16"><rect x="1" y="2" width="12" height="13" fill="#fff" stroke="#e8963c" stroke-width="1.6"/><rect x="4.5" y="0" width="5" height="3.5" rx="1" fill="#7a7a7a"/><path d="M3.8 8.5l2.5 3l4.2-5.5" fill="none" stroke="#d03a2a" stroke-width="1.7"/></svg>
<span class="t" style="left:148.7px;top:996.0px;height:17px;line-height:17px;font-size:12px;color:#777;letter-spacing:-0.933px;font-weight:normal;">Check Lists</span>
<div style="left:128px;top:997px;width:1px;height:15px;background:#666"></div>
<div style="left:209px;top:997px;width:1px;height:15px;background:#666"></div>
<div style="left:518px;top:96px;width:1402px;height:919px;border:1px solid #8a8a8a;background:#f3f4f6;box-sizing:border-box"></div>
<div style="left:519px;top:97px;width:1400px;height:22px;background:#eeeeee"></div>
<div style="left:519px;top:119px;width:1400px;height:1px;background:#6a6a6a"></div>
<svg style="left:675px;top:100px" width="168" height="20" viewBox="0 0 168 20"><path d="M0.5 19.5 L17 3 Q19.5 0.5 23 0.5 H165 Q167.5 0.5 167.5 3 V19.5" fill="#e4e4e4" stroke="#6a6a6a"/></svg>
<svg style="left:704px;top:102px" width="16" height="16" viewBox="0 0 16 16"><g transform="scale(0.66)"><path d="M12.2 0 L0 12.8 H5 V23.7 H10 V16.2 H14.6 V23.7 H19.4 V12.8 H24.4 Z" fill="#6e6e6e"/><path d="M17.2 0 H21.4 V5.6 H19.8 Z" fill="#3a6eb0"/></g></svg>
<span class="t" style="left:729.3px;top:102.0px;height:17px;line-height:17px;font-size:12px;color:#000;letter-spacing:-0.605px;font-weight:normal;">Machinery - Data</span>
<svg style="left:525px;top:100px" width="168" height="20" viewBox="0 0 168 20"><path d="M0.5 19.5 L17 3 Q19.5 0.5 23 0.5 H165 Q167.5 0.5 167.5 3 V19.5" fill="#e4e4e4" stroke="#6a6a6a"/></svg>
<svg style="left:544px;top:102px" width="16" height="16" viewBox="0 0 16 16"><g transform="scale(0.66)"><path d="M12.2 0 L0 12.8 H5 V23.7 H10 V16.2 H14.6 V23.7 H19.4 V12.8 H24.4 Z" fill="#6e6e6e"/><path d="M17.2 0 H21.4 V5.6 H19.8 Z" fill="#3a6eb0"/></g></svg>
<span class="t" style="left:571px;top:102.0px;height:17px;line-height:17px;font-size:12px;color:#000;letter-spacing:-0.747px;font-weight:normal;">Home | Dashboard</span>
<svg style="left:835px;top:100px" width="209" height="20" viewBox="0 0 209 20"><defs><linearGradient id="gt" x1="0" y1="0" x2="0" y2="1"><stop offset="0" stop-color="#ffffff"/><stop offset="1" stop-color="#f3f4f6"/></linearGradient></defs><path d="M0.5 19.5 L17 3 Q19.5 0.5 23 0.5 H206 Q208.5 0.5 208.5 3 V19.5" fill="url(#gt)" stroke="#6a6a6a"/><path d="M1 19.5 H208" stroke="#f3f4f6" /></svg>
<svg style="left:855px;top:102px" width="16" height="16" viewBox="0 0 16 16"><rect x="0" y="1.2" width="14" height="14.8" rx="1" fill="#3a6eb0"/><rect x="1" y="0" width="12" height="3" fill="#3a6eb0"/><rect x="2.4" y="0.7" width="1.9" height="2" fill="#e8eef8"/><rect x="6.05" y="0.7" width="1.9" height="2" fill="#e8eef8"/><rect x="9.7" y="0.7" width="1.9" height="2" fill="#e8eef8"/></svg>
<span class="t" style="left:872.7px;top:102.0px;height:17px;line-height:17px;font-size:12px;color:#000;letter-spacing:0.124px;font-weight:bold;">VR2-001/001215 (Asses...</span>
<svg style="left:1029px;top:105px" width="10" height="10" viewBox="0 0 10 10"><path d="M0.5 0.5l9 9M9.5 0.5l-9 9" stroke="#000" stroke-width="1.6"/></svg>
<svg style="left:1900px;top:108px" width="9" height="5" viewBox="0 0 9 5"><path d="M0 0h9l-4.5 5z" fill="#000"/></svg>
<svg style="left:522px;top:125px" width="2" height="15" viewBox="0 0 2 15"><rect x="0" y="0" width="2" height="2" fill="#c0c0c0"/><rect x="0" y="4" width="2" height="2" fill="#c0c0c0"/><rect x="0" y="8" width="2" height="2" fill="#c0c0c0"/><rect x="0" y="12" width="2" height="2" fill="#c0c0c0"/></svg>
<svg style="left:532px;top:125px" width="16" height="17" viewBox="0 0 16 17"><rect x="0.8" y="1.8" width="12.4" height="13.6" rx="1" fill="#fff" stroke="#9ab4d8" stroke-width="1.6"/><path d="M2.2 0.3h2v2.4h-2zM4.9 0.3h2v2.4h-2zM7.6 0.3h2v2.4h-2zM10.3 0.3h2v2.4h-2z" fill="#9ab4d8"/><path d="M3 1.2h0.8M5.6 1.2h0.8M8.3 1.2h0.8M11 1.2h0.8" stroke="#fff" stroke-width="0.8"/><path d="M3.5 6.5h7M3.5 8.5h7M3.5 10.5h7M3.5 12.5h7" stroke="#c4c4c4" stroke-width="1"/></svg>
<div style="left:554px;top:126px;width:1px;height:16px;background:#d0d0d0"></div>
<svg style="left:561px;top:125px" width="16" height="17" viewBox="0 0 16 17"><rect x="0.8" y="1.8" width="12.4" height="13.6" rx="1" fill="#fff" stroke="#3a6eb0" stroke-width="1.6"/><path d="M2.2 0.3h2v2.4h-2zM4.9 0.3h2v2.4h-2zM7.6 0.3h2v2.4h-2zM10.3 0.3h2v2.4h-2z" fill="#3a6eb0"/><path d="M3 1.2h0.8M5.6 1.2h0.8M8.3 1.2h0.8M11 1.2h0.8" stroke="#fff" stroke-width="0.8"/><path d="M3.5 6.5h7M3.5 8.5h7M3.5 10.5h7M3.5 12.5h7" stroke="#c4c4c4" stroke-width="1"/><rect x="6.6" y="7.6" width="8.8" height="8.6" rx="1" fill="#8a8a8a"/><text x="11" y="15" font-size="7.5" font-weight="bold" fill="#e8e8e8" text-anchor="middle" font-family="Liberation Sans">?</text></svg>
<svg style="left:584px;top:125px" width="16" height="17" viewBox="0 0 16 17"><rect x="0.8" y="1.8" width="12.4" height="13.6" rx="1" fill="#fff" stroke="#3a6eb0" stroke-width="1.6"/><path d="M2.2 0.3h2v2.4h-2zM4.9 0.3h2v2.4h-2zM7.6 0.3h2v2.4h-2zM10.3 0.3h2v2.4h-2z" fill="#3a6eb0"/><path d="M3 1.2h0.8M5.6 1.2h0.8M8.3 1.2h0.8M11 1.2h0.8" stroke="#fff" stroke-width="0.8"/><path d="M3.5 6.5h7M3.5 8.5h7M3.5 10.5h7M3.5 12.5h7" stroke="#c4c4c4" stroke-width="1"/><circle cx="11" cy="11.8" r="4.7" fill="#2e9e5b"/><path d="M8.4 11.8l1.9 2l3.4-3.8" stroke="#fff" stroke-width="1.6" fill="none"/></svg>
<svg style="left:607px;top:125px" width="16" height="17" viewBox="0 0 16 17"><rect x="0.8" y="1.8" width="12.4" height="13.6" rx="1" fill="#fff" stroke="#3a6eb0" stroke-width="1.6"/><path d="M2.2 0.3h2v2.4h-2zM4.9 0.3h2v2.4h-2zM7.6 0.3h2v2.4h-2zM10.3 0.3h2v2.4h-2z" fill="#3a6eb0"/><path d="M3 1.2h0.8M5.6 1.2h0.8M8.3 1.2h0.8M11 1.2h0.8" stroke="#fff" stroke-width="0.8"/><path d="M3.5 6.5h7M3.5 8.5h7M3.5 10.5h7M3.5 12.5h7" stroke="#c4c4c4" stroke-width="1"/><circle cx="11" cy="11.8" r="4.7" fill="#d9432f"/><path d="M11 8.8v3.6M11 13.6v1.4" stroke="#fff" stroke-width="1.6"/></svg>
<div style="left:629px;top:126px;width:1px;height:16px;background:#d0d0d0"></div>
<svg style="left:635px;top:125px" width="16" height="17" viewBox="0 0 16 17"><rect x="0.8" y="1.8" width="12.4" height="13.6" rx="1" fill="#fff" stroke="#9ab4d8" stroke-width="1.6"/><path d="M2.2 0.3h2v2.4h-2zM4.9 0.3h2v2.4h-2zM7.6 0.3h2v2.4h-2zM10.3 0.3h2v2.4h-2z" fill="#9ab4d8"/><path d="M3 1.2h0.8M5.6 1.2h0.8M8.3 1.2h0.8M11 1.2h0.8" stroke="#fff" stroke-width="0.8"/><path d="M3.5 6.5h7M3.5 8.5h7M3.5 10.5h7M3.5 12.5h7" stroke="#c4c4c4" stroke-width="1"/><path d="M1 8.5l6 6M7 8.5l-6 6" stroke="#d9432f" stroke-width="2"/></svg>
<div style="left:658px;top:126px;width:1px;height:16px;background:#d0d0d0"></div>
<svg style="left:663px;top:125px" width="17" height="17" viewBox="0 0 17 17"><path d="M16.3 3.4 a4.8 4.8 0 0 1 -6.4 4.6 L3.9 15.6 a2.2 2.2 0 0 1 -3.2 -3.1 L8.2 6.3 a4.8 4.8 0 0 1 5.2 -6 L10.6 3 L11.6 5.5 L14.2 6.2 Z" fill="#9c2a22"/><circle cx="2.5" cy="14" r="0.9" fill="#f3f4f6"/></svg>
<span class="t" style="left:682px;top:125.5px;height:17px;line-height:17px;font-size:12px;color:#000;letter-spacing:-0.2px;font-weight:normal;">Tools</span>
<svg style="left:715px;top:132px" width="6" height="4" viewBox="0 0 6 4"><path d="M0 0h6l-3 4z" fill="#000"/></svg>
<span class="t" style="left:521.7px;top:151.5px;height:17px;line-height:17px;font-size:12px;color:#000;letter-spacing:-0.478px;font-weight:normal;">Group:</span>
<div style="left:558px;top:150px;width:511px;height:21px;background:#fff"></div>
<span class="t" style="left:563.3px;top:151.5px;height:17px;line-height:17px;font-size:12px;color:#000;letter-spacing:0.066px;font-weight:normal;">(No filter)</span>
<div style="left:1053px;top:151px;width:16px;height:19px;background:#f3f4f6"></div>
<svg style="left:1058px;top:159px" width="6" height="4" viewBox="0 0 6 4"><path d="M0 0h6l-3 4z" fill="#000"/></svg>
<div style="left:519px;top:174px;width:551px;height:840px;background:#fff"></div>
<div style="left:1070px;top:120px;width:7px;height:894px;background:#f0f0f0"></div>
<div style="left:1077px;top:171px;width:842px;height:843px;background:#f0f0f0"></div>
<div style="left:571px;top:174px;width:276px;height:18px;background:#f0f0f0"></div>
<svg style="left:526px;top:180px" width="9" height="9" viewBox="0 0 9 9"><rect x="0.5" y="0.5" width="8" height="8" fill="#fff" stroke="#919191"/><path d="M2 4.5h5" stroke="#3a50a0"/></svg>
<svg style="left:536px;top:184px" width="4" height="1" viewBox="0 0 4 1"><path d="M0 0.5H4" stroke="#a0a0a0" stroke-dasharray="1 1"/></svg>
<div style="left:541px;top:176px;width:13px;height:13px;border:1px solid #333;background:#fff;box-sizing:border-box"></div>
<svg style="left:554px;top:177px" width="17" height="16" viewBox="0 0 17 16"><path d="M0.5 9 V1.6 Q0.5 0.5 1.6 0.5 H5.6 L7.4 2.4 H13.5 V6" fill="#8c8c8c" stroke="#6e6e6e"/><path d="M1 13.7 L2.2 5.3 H15.6 L14.4 13.7 Z" fill="#f0b45c"/></svg>
<span class="t" style="left:575.6px;top:175.0px;height:17px;line-height:17px;font-size:12px;color:#000;letter-spacing:-0.605px;font-weight:normal;">1 - Requisiti essenziali di sicurezza e di tutela della salute</span>
<svg style="left:545px;top:198px" width="9" height="9" viewBox="0 0 9 9"><rect x="0.5" y="0.5" width="8" height="8" fill="#fff" stroke="#919191"/><path d="M2 4.5h5" stroke="#3a50a0"/><path d="M4.5 2v5" stroke="#3a50a0"/></svg>
<svg style="left:555px;top:202px" width="4" height="1" viewBox="0 0 4 1"><path d="M0 0.5H4" stroke="#a0a0a0" stroke-dasharray="1 1"/></svg>
<div style="left:560px;top:194px;width:13px;height:13px;border:1px solid #333;background:#fff;box-sizing:border-box"></div>
<svg style="left:573px;top:195px" width="17" height="16" viewBox="0 0 17 16"><path d="M0.5 9 V1.6 Q0.5 0.5 1.6 0.5 H5.6 L7.4 2.4 H13.5 V6" fill="#8c8c8c" stroke="#6e6e6e"/><path d="M1 13.7 L2.2 5.3 H15.6 L14.4 13.7 Z" fill="#f0b45c"/></svg>
<span class="t" style="left:594.7px;top:193.0px;height:17px;line-height:17px;font-size:12px;color:#000;letter-spacing:-0.645px;font-weight:normal;">1.1 - Considerazioni generali</span>
<svg style="left:545px;top:216px" width="9" height="9" viewBox="0 0 9 9"><rect x="0.5" y="0.5" width="8" height="8" fill="#fff" stroke="#919191"/><path d="M2 4.5h5" stroke="#3a50a0"/><path d="M4.5 2v5" stroke="#3a50a0"/></svg>
<svg style="left:555px;top:220px" width="4" height="1" viewBox="0 0 4 1"><path d="M0 0.5H4" stroke="#a0a0a0" stroke-dasharray="1 1"/></svg>
<div style="left:560px;top:212px;width:13px;height:13px;border:1px solid #333;background:#fff;box-sizing:border-box"></div>
<svg style="left:573px;top:213px" width="17" height="16" viewBox="0 0 17 16"><path d="M0.5 9 V1.6 Q0.5 0.5 1.6 0.5 H5.6 L7.4 2.4 H13.5 V6" fill="#8c8c8c" stroke="#6e6e6e"/><path d="M1 13.7 L2.2 5.3 H15.6 L14.4 13.7 Z" fill="#f0b45c"/></svg>
<span class="t" style="left:594.7px;top:211.0px;height:17px;line-height:17px;font-size:12px;color:#000;letter-spacing:-0.764px;font-weight:normal;">1.2 - Sistemi di comando</span>
<svg style="left:545px;top:234px" width="9" height="9" viewBox="0 0 9 9"><rect x="0.5" y="0.5" width="8" height="8" fill="#fff" stroke="#919191"/><path d="M2 4.5h5" stroke="#3a50a0"/><path d="M4.5 2v5" stroke="#3a50a0"/></svg>
<svg style="left:555px;top:238px" width="4" height="1" viewBox="0 0 4 1"><path d="M0 0.5H4" stroke="#a0a0a0" stroke-dasharray="1 1"/></svg>
<div style="left:560px;top:230px;width:13px;height:13px;border:1px solid #333;background:#fff;box-sizing:border-box"></div>
<svg style="left:573px;top:231px" width="17" height="16" viewBox="0 0 17 16"><path d="M0.5 9 V1.6 Q0.5 0.5 1.6 0.5 H5.6 L7.4 2.4 H13.5 V6" fill="#8c8c8c" stroke="#6e6e6e"/><path d="M1 13.7 L2.2 5.3 H15.6 L14.4 13.7 Z" fill="#f0b45c"/></svg>
<span class="t" style="left:594.7px;top:229.0px;height:17px;line-height:17px;font-size:12px;color:#000;letter-spacing:-0.608px;font-weight:normal;">1.3 - Misure di protezione contro i pericoli meccanici</span>
<svg style="left:545px;top:252px" width="9" height="9" viewBox="0 0 9 9"><rect x="0.5" y="0.5" width="8" height="8" fill="#fff" stroke="#919191"/><path d="M2 4.5h5" stroke="#3a50a0"/><path d="M4.5 2v5" stroke="#3a50a0"/></svg>
<svg style="left:555px;top:256px" width="4" height="1" viewBox="0 0 4 1"><path d="M0 0.5H4" stroke="#a0a0a0" stroke-dasharray="1 1"/></svg>
<div style="left:560px;top:248px;width:13px;height:13px;border:1px solid #333;background:#fff;box-sizing:border-box"></div>
<svg style="left:573px;top:249px" width="17" height="16" viewBox="0 0 17 16"><path d="M0.5 9 V1.6 Q0.5 0.5 1.6 0.5 H5.6 L7.4 2.4 H13.5 V6" fill="#8c8c8c" stroke="#6e6e6e"/><path d="M1 13.7 L2.2 5.3 H15.6 L14.4 13.7 Z" fill="#f0b45c"/></svg>
<span class="t" style="left:594.7px;top:247.0px;height:17px;line-height:17px;font-size:12px;color:#000;letter-spacing:-0.486px;font-weight:normal;">1.4 - Caratteristiche richieste per i ripari ed i dispositivi di protezione</span>
<svg style="left:545px;top:270px" width="9" height="9" viewBox="0 0 9 9"><rect x="0.5" y="0.5" width="8" height="8" fill="#fff" stroke="#919191"/><path d="M2 4.5h5" stroke="#3a50a0"/><path d="M4.5 2v5" stroke="#3a50a0"/></svg>
<svg style="left:555px;top:274px" width="4" height="1" viewBox="0 0 4 1"><path d="M0 0.5H4" stroke="#a0a0a0" stroke-dasharray="1 1"/></svg>
<div style="left:560px;top:266px;width:13px;height:13px;border:1px solid #333;background:#fff;box-sizing:border-box"></div>
<svg style="left:573px;top:267px" width="17" height="16" viewBox="0 0 17 16"><path d="M0.5 9 V1.6 Q0.5 0.5 1.6 0.5 H5.6 L7.4 2.4 H13.5 V6" fill="#8c8c8c" stroke="#6e6e6e"/><path d="M1 13.7 L2.2 5.3 H15.6 L14.4 13.7 Z" fill="#f0b45c"/></svg>
<span class="t" style="left:594.7px;top:265.0px;height:17px;line-height:17px;font-size:12px;color:#000;letter-spacing:-0.541px;font-weight:normal;">1.5 - Rischi dovuti ad altri pericoli</span>
<svg style="left:545px;top:288px" width="9" height="9" viewBox="0 0 9 9"><rect x="0.5" y="0.5" width="8" height="8" fill="#fff" stroke="#919191"/><path d="M2 4.5h5" stroke="#3a50a0"/><path d="M4.5 2v5" stroke="#3a50a0"/></svg>
<svg style="left:555px;top:292px" width="4" height="1" viewBox="0 0 4 1"><path d="M0 0.5H4" stroke="#a0a0a0" stroke-dasharray="1 1"/></svg>
<div style="left:560px;top:284px;width:13px;height:13px;border:1px solid #333;background:#fff;box-sizing:border-box"></div>
<svg style="left:573px;top:285px" width="17" height="16" viewBox="0 0 17 16"><path d="M0.5 9 V1.6 Q0.5 0.5 1.6 0.5 H5.6 L7.4 2.4 H13.5 V6" fill="#8c8c8c" stroke="#6e6e6e"/><path d="M1 13.7 L2.2 5.3 H15.6 L14.4 13.7 Z" fill="#f0b45c"/></svg>
<span class="t" style="left:594.7px;top:283.0px;height:17px;line-height:17px;font-size:12px;color:#000;letter-spacing:-0.655px;font-weight:normal;">1.6 - Manutenzione</span>
<svg style="left:545px;top:306px" width="9" height="9" viewBox="0 0 9 9"><rect x="0.5" y="0.5" width="8" height="8" fill="#fff" stroke="#919191"/><path d="M2 4.5h5" stroke="#3a50a0"/><path d="M4.5 2v5" stroke="#3a50a0"/></svg>
<svg style="left:555px;top:310px" width="4" height="1" viewBox="0 0 4 1"><path d="M0 0.5H4" stroke="#a0a0a0" stroke-dasharray="1 1"/></svg>
<div style="left:560px;top:302px;width:13px;height:13px;border:1px solid #333;background:#fff;box-sizing:border-box"></div>
<svg style="left:573px;top:303px" width="17" height="16" viewBox="0 0 17 16"><path d="M0.5 9 V1.6 Q0.5 0.5 1.6 0.5 H5.6 L7.4 2.4 H13.5 V6" fill="#8c8c8c" stroke="#6e6e6e"/><path d="M1 13.7 L2.2 5.3 H15.6 L14.4 13.7 Z" fill="#f0b45c"/></svg>
<span class="t" style="left:594.7px;top:301.0px;height:17px;line-height:17px;font-size:12px;color:#000;letter-spacing:-0.531px;font-weight:normal;">1.7 - Informazioni</span>
<svg style="left:549px;top:192px" width="1" height="113" viewBox="0 0 1 113"><path d="M0.5 0V113" stroke="#a0a0a0" stroke-dasharray="1 1"/></svg>
<svg style="left:1077px;top:125px" width="2" height="38" viewBox="0 0 2 38"><rect x="0" y="0" width="2" height="2" fill="#b8b8b8"/><rect x="0" y="4" width="2" height="2" fill="#b8b8b8"/><rect x="0" y="8" width="2" height="2" fill="#b8b8b8"/><rect x="0" y="12" width="2" height="2" fill="#b8b8b8"/><rect x="0" y="16" width="2" height="2" fill="#b8b8b8"/><rect x="0" y="20" width="2" height="2" fill="#b8b8b8"/><rect x="0" y="24" width="2" height="2" fill="#b8b8b8"/><rect x="0" y="28" width="2" height="2" fill="#b8b8b8"/><rect x="0" y="32" width="2" height="2" fill="#b8b8b8"/><rect x="0" y="36" width="2" height="2" fill="#b8b8b8"/></svg>
<svg style="left:1099px;top:125px" width="24" height="24" viewBox="0 0 24 24"><circle cx="12" cy="12" r="10.8" fill="#fff" stroke="#3a6eb0" stroke-width="2"/><path  d="M4.5 12 L11 5.5 V9.8 H19 V14.2 H11 V18.5 Z" fill="#3a6eb0"/></svg>
<span class="t" style="left:1010.5px;width:200px;text-align:center;top:148.5px;height:17px;line-height:17px;font-size:12px;color:#000;letter-spacing:-0.2px;font-weight:normal;">Previous</span>
<span class="t" style="left:1145px;top:124.5px;height:15px;line-height:15px;font-size:11px;color:#000;letter-spacing:0px;font-weight:normal;">1</span>
<span class="t" style="left:1145px;top:142.0px;height:25px;line-height:25px;font-size:17.6px;color:#000;letter-spacing:0.584px;font-weight:normal;transform:scaleX(1.13);transform-origin:0 50%;">Requisiti essenziali di sicurezza e di tutela della salute</span>
<svg style="left:1888px;top:125px" width="24" height="24" viewBox="0 0 24 24"><circle cx="12" cy="12" r="10.8" fill="#fff" stroke="#3a6eb0" stroke-width="2"/><path transform="translate(24,0) scale(-1,1)" d="M4.5 12 L11 5.5 V9.8 H19 V14.2 H11 V18.5 Z" fill="#3a6eb0"/></svg>
<span class="t" style="left:1800px;width:200px;text-align:center;top:148.5px;height:17px;line-height:17px;font-size:12px;color:#000;letter-spacing:-0.2px;font-weight:normal;">Next</span>
<div style="left:1520px;top:1018px;width:1px;height:19px;background:#8a8a8a"></div>
<span class="t" style="left:1525.6px;top:1019.8px;height:17px;line-height:17px;font-size:12px;color:#000;letter-spacing:-0.729px;font-weight:normal;">Cards:</span>
<svg style="left:1566px;top:1020px" width="13" height="16" viewBox="0 0 13 16"><rect x="0.7" y="2" width="11.6" height="13" rx="1" fill="#f4f7fb" stroke="#9ab4d8" stroke-width="1.4"/><rect x="3.5" y="0.5" width="6" height="3" fill="#9ab4d8"/><path d="M3 6.5h7M3 8.5h7M3 10.5h7M3 12.5h7" stroke="#c8c8c8"/></svg>
<span class="t" style="left:1583px;top:1019.5px;height:17px;line-height:17px;font-size:12px;color:#000;letter-spacing:-0.2px;font-weight:normal;">62</span>
<div style="left:1599px;top:1018px;width:1px;height:19px;background:#8a8a8a"></div>
<svg style="left:1601px;top:1020px" width="14" height="17" viewBox="0 0 14 17"><path d="M3.2 10 L1.8 16.6 L4.6 15.2 L6.2 17 L7 11 Z M10.8 10 L12.2 16.6 L9.4 15.2 L7.8 17 L7 11 Z" fill="#c0392b"/><polygon points="13.60,6.60 12.12,7.97 12.72,9.90 10.75,10.35 10.30,12.32 8.37,11.72 7.00,13.20 5.63,11.72 3.70,12.32 3.25,10.35 1.28,9.90 1.88,7.97 0.40,6.60 1.88,5.23 1.28,3.30 3.25,2.85 3.70,0.88 5.63,1.48 7.00,0.00 8.37,1.48 10.30,0.88 10.75,2.85 12.72,3.30 12.12,5.23" fill="#e8693f"/><circle cx="7" cy="6.6" r="3.9" fill="#d4512f"/></svg>
<span class="t" style="left:1619.3px;top:1019.8px;height:17px;line-height:17px;font-size:12px;color:#000;letter-spacing:-0.337px;font-weight:normal;">Dir. 2006/42/EC</span>
<div style="left:1706px;top:1018px;width:1px;height:19px;background:#8a8a8a"></div>
<svg style="left:1709px;top:1021px" width="14" height="15" viewBox="0 0 14 15"><circle cx="7" cy="4" r="3.6" fill="#a82838"/><path d="M0 15 V12 Q0 8.5 4 8.5 L7 11 L10 8.5 Q14 8.5 14 12 V15 Z" fill="#a82838"/></svg>
<span class="t" style="left:1728.3px;top:1019.8px;height:17px;line-height:17px;font-size:12px;color:#000;letter-spacing:0.168px;font-weight:normal;">Administrator</span>
<svg style="left:1806px;top:1027px" width="6" height="4" viewBox="0 0 6 4"><path d="M0 0h6l-3 4z" fill="#000"/></svg>
<div style="left:1816px;top:1018px;width:1px;height:19px;background:#8a8a8a"></div>
<svg style="left:1818px;top:1020px" width="16" height="16" viewBox="0 0 16 16"><g fill="none" stroke="#3a6eb0" stroke-width="2"><rect x="7" y="-1" width="6" height="10" rx="3" transform="rotate(45 10 4)"/><rect x="1.5" y="7" width="6" height="10" rx="3" transform="rotate(45 4.5 12)"/></g></svg>
<span class="t" style="left:1836.6px;top:1019.8px;height:17px;line-height:17px;font-size:12px;color:#000;letter-spacing:0.003px;font-weight:normal;">cemfu</span>
<div style="left:1876px;top:1018px;width:1px;height:19px;background:#8a8a8a"></div>
<svg style="left:1880px;top:1021px" width="14" height="14" viewBox="0 0 14 14"><circle cx="7" cy="7" r="7" fill="#3a6eb0"/><text x="7" y="9.8" font-size="7" font-weight="bold" fill="#cfe0f5" text-anchor="middle" font-family="Liberation Sans">EN</text></svg>
<svg style="left:1896px;top:1027px" width="6" height="4" viewBox="0 0 6 4"><path d="M0 0h6l-3 4z" fill="#000"/></svg>
<div style="left:1076px;top:175px;width:764px;height:837px;background:#fff;border:1px solid #8c8c8c;box-sizing:border-box;box-shadow:0 1px 15px 3px rgba(0,0,0,0.32)"></div>
<svg style="left:1085px;top:182px" width="16" height="17" viewBox="0 0 16 17"><path d="M3.5 0.5 H11.5 L15.5 4.5 V15.5 H3.5 Z" fill="#f4f4f4" stroke="#b8b8b8"/><circle cx="7" cy="8" r="4.6" fill="#bfe0f4" stroke="#9a9a9a" stroke-width="1.3"/><path d="M3.8 11.5 L0.8 15.5" stroke="#8a8a8a" stroke-width="2.2" stroke-linecap="round"/></svg>
<span class="t" style="left:1106.2px;top:182.5px;height:17px;line-height:17px;font-size:12px;color:#000;letter-spacing:-0.13px;font-weight:normal;">Print preview - RA Complete Summary (4.7.4 rev. 98)</span>
<svg style="left:1719px;top:184px" width="104" height="12" viewBox="0 0 104 12"><path d="M0.5 6.5h10" stroke="#000"/><rect x="46" y="1" width="9.5" height="9.5" fill="none" stroke="#000" stroke-width="1.1"/><path d="M92 0.5l10 10M102 0.5l-10 10" stroke="#000" stroke-width="1.1"/></svg>
<span class="t" style="left:1092px;top:210.0px;height:17px;line-height:17px;font-size:12px;color:#000;letter-spacing:-0.2px;font-weight:normal;">File</span>
<span class="t" style="left:1129px;top:210.0px;height:17px;line-height:17px;font-size:12px;color:#000;letter-spacing:-0.2px;font-weight:normal;">View</span>
<div style="left:1077px;top:230px;width:762px;height:46px;background:#f3f4f6"></div>
<svg style="left:1080px;top:235px" width="2" height="33" viewBox="0 0 2 33"><rect x="0" y="0" width="2" height="2" fill="#b0b0b0"/><rect x="0" y="4" width="2" height="2" fill="#b0b0b0"/><rect x="0" y="8" width="2" height="2" fill="#b0b0b0"/><rect x="0" y="12" width="2" height="2" fill="#b0b0b0"/><rect x="0" y="16" width="2" height="2" fill="#b0b0b0"/><rect x="0" y="20" width="2" height="2" fill="#b0b0b0"/><rect x="0" y="24" width="2" height="2" fill="#b0b0b0"/><rect x="0" y="28" width="2" height="2" fill="#b0b0b0"/><rect x="0" y="32" width="2" height="2" fill="#b0b0b0"/></svg>
<svg style="left:1096px;top:235px" width="21" height="20" viewBox="0 0 21 20"><rect x="0" y="0" width="21" height="20" rx="2.5" fill="#d0432f"/><path d="M6 5.5l9 9M15 5.5l-9 9" stroke="#fff" stroke-width="2.6"/></svg>
<span class="t" style="left:1006px;width:200px;text-align:center;top:256.5px;height:17px;line-height:17px;font-size:12px;color:#000;letter-spacing:-0.2px;font-weight:normal;">Close</span>
<div style="left:1129px;top:235px;width:1px;height:37px;background:#d0d0d0"></div>
<svg style="left:1138px;top:233px" width="24" height="23" viewBox="0 0 24 23"><rect x="5" y="0.5" width="14" height="7" fill="#fff" stroke="#8a8a8a"/><rect x="4" y="5" width="16" height="5" fill="#3a6eb0"/><path d="M0 9 Q0 7 2 7 H22 Q24 7 24 9 V18 H0 Z" fill="#737373"/><rect x="4" y="6" width="16" height="4" rx="1" fill="#3a6eb0"/><rect x="5.5" y="14.5" width="13" height="8" fill="#fff" stroke="#8a8a8a"/><path d="M8 17.5h8M8 19.5h8" stroke="#8ab0dc"/></svg>
<span class="t" style="left:1049.5px;width:200px;text-align:center;top:256.5px;height:17px;line-height:17px;font-size:12px;color:#000;letter-spacing:-0.2px;font-weight:normal;">Print</span>
<svg style="left:1178px;top:234px" width="24" height="23" viewBox="0 0 24 23"><path d="M0.5 0.5 H12.5 L17.5 5.5 V22.5 H0.5 Z" fill="#fff" stroke="#8a8a8a"/><path d="M12.5 0.5 V5.5 H17.5" fill="none" stroke="#8a8a8a"/><path d="M3 5.5h8M3 8h11M3 10.5h11M3 13h11M3 15.5h11M3 18h11M3 20.5h11" stroke="#3a6eb0" stroke-width="1"/><rect x="10" y="6" width="10" height="7" fill="#fff"/><path d="M11 8.5 H18 V5.5 L23.5 10 L18 14.5 V11.5 H11 Z" fill="#9a4fb8"/></svg>
<span class="t" style="left:1089.5px;width:200px;text-align:center;top:256.5px;height:17px;line-height:17px;font-size:12px;color:#000;letter-spacing:-0.2px;font-weight:normal;">Export</span>
<div style="left:1215px;top:235px;width:1px;height:37px;background:#d0d0d0"></div>
<svg style="left:1226px;top:236px" width="15" height="18" viewBox="0 0 15 18"><rect x="0" y="0" width="3" height="18" fill="#3a6eb0"/><path d="M15 0 V18 L5 9 Z" fill="#3a6eb0"/></svg>
<span class="t" style="left:1133.5px;width:200px;text-align:center;top:256.5px;height:17px;line-height:17px;font-size:12px;color:#000;letter-spacing:-0.2px;font-weight:normal;">First</span>
<svg style="left:1264px;top:236px" width="10" height="18" viewBox="0 0 10 18"><path d="M10 0 V18 L0 9 Z" fill="#3a6eb0"/></svg>
<span class="t" style="left:1168.5px;width:200px;text-align:center;top:256.5px;height:17px;line-height:17px;font-size:12px;color:#000;letter-spacing:-0.2px;font-weight:normal;">Prev.</span>
<svg style="left:1300px;top:236px" width="10" height="18" viewBox="0 0 10 18"><path d="M0 0 V18 L10 9 Z" fill="#3a6eb0"/></svg>
<span class="t" style="left:1205px;width:200px;text-align:center;top:256.5px;height:17px;line-height:17px;font-size:12px;color:#000;letter-spacing:-0.2px;font-weight:normal;">Next</span>
<svg style="left:1331px;top:236px" width="15" height="18" viewBox="0 0 15 18"><rect x="12" y="0" width="3" height="18" fill="#3a6eb0"/><path d="M0 0 V18 L10 9 Z" fill="#3a6eb0"/></svg>
<span class="t" style="left:1238.5px;width:200px;text-align:center;top:256.5px;height:17px;line-height:17px;font-size:12px;color:#000;letter-spacing:-0.2px;font-weight:normal;">Last</span>
<div style="left:1358px;top:235px;width:1px;height:37px;background:#d0d0d0"></div>
<svg style="left:1366px;top:234px" width="23" height="20" viewBox="0 0 23 20"><rect x="0" y="0" width="15" height="4.5" fill="#3a6eb0"/><rect x="9" y="8" width="14" height="4.5" fill="#3a6eb0"/><rect x="9" y="15.5" width="14" height="4.5" fill="#3a6eb0"/><path d="M4.5 4.5V17.5H9M4.5 10.5H9" fill="none" stroke="#666"/><rect x="2.5" y="8.5" width="4" height="4" fill="#fff" stroke="#666"/><rect x="2.5" y="15.5" width="4" height="4" fill="#fff" stroke="#666"/></svg>
<span class="t" style="left:1277px;width:200px;text-align:center;top:256.5px;height:17px;line-height:17px;font-size:12px;color:#000;letter-spacing:-0.2px;font-weight:normal;">Tree</span>
<svg style="left:1402px;top:233px" width="24" height="24" viewBox="0 0 24 24"><circle cx="14" cy="9.5" r="8" fill="#fff" stroke="#5a5a5a" stroke-width="2.6"/><path d="M8 16 L1.5 22.5" stroke="#5a5a5a" stroke-width="3.4" stroke-linecap="round"/><path d="M14 5v9M9.5 9.5h9" stroke="#3a6eb0" stroke-width="2.4"/></svg>
<span class="t" style="left:1314.5px;width:200px;text-align:center;top:256.5px;height:17px;line-height:17px;font-size:12px;color:#000;letter-spacing:-0.2px;font-weight:normal;">Zoom</span>
<svg style="left:1440px;top:251px" width="7" height="4" viewBox="0 0 7 4"><path d="M0 0h7l-3.5 4z" fill="#000"/></svg>
<div style="left:1077px;top:276px;width:762px;height:735px;background:#f0f0f0"></div>
<div style="left:1081px;top:281px;width:753px;height:706px;background:#a9a9a9;border:1px solid #747474;box-sizing:border-box"></div>
<div style="left:1817px;top:282px;width:16px;height:704px;background:#f0f0f0"></div>
<div style="left:1819px;top:301px;width:14px;height:662px;background:#cdcdcd"></div>
<svg style="left:1821px;top:288px" width="9" height="6" viewBox="0 0 9 6"><path d="M0.7 5.3L4.5 1.5L8.3 5.3" fill="none" stroke="#505050" stroke-width="1.6"/></svg>
<svg style="left:1821px;top:974px" width="9" height="6" viewBox="0 0 9 6"><path d="M0.7 0.7L4.5 4.5L8.3 0.7" fill="none" stroke="#505050" stroke-width="1.6"/></svg>
<div style="left:1215px;top:287px;width:491px;height:695px;background:#000"></div>
<div style="left:1211px;top:283px;width:494px;height:697px;background:#fff"></div>
<div style="left:1077px;top:991px;width:762px;height:20px;background:#f0f0f0;border-top:1px solid #dcdcdc;box-sizing:border-box"></div>
<span class="t" style="left:1079.3px;top:993.5px;height:17px;line-height:17px;font-size:12px;color:#000;letter-spacing:-0.104px;font-weight:normal;">N. pagina corrente: 2</span>
<span class="t" style="left:1335px;top:993.5px;height:17px;line-height:17px;font-size:12px;color:#000;letter-spacing:-0.058px;font-weight:normal;">N. pagine totali: 2+</span>
<span class="t" style="left:1589.3px;top:993.5px;height:17px;line-height:17px;font-size:12px;color:#000;letter-spacing:-0.031px;font-weight:normal;">Fattore di ingrandimento: Pagina intera</span>
<div style="left:1330px;top:994px;width:1px;height:15px;background:#d0d0d0"></div>
<div style="left:1584px;top:994px;width:1px;height:15px;background:#d0d0d0"></div>
<svg style="left:1246px;top:307px" width="24" height="23" viewBox="0 0 24 23"><rect width="24" height="23" fill="#9d98fb"/><path d="M23 7 Q14 3.3 6 5.6 Q0.6 7.6 1 11.5 Q1.5 15.6 8 17.1 Q15 18.6 23 15.4 L23 13.8 Q13 15.6 8.5 14.2 Q5 13 5.2 11.2 Q5.5 9 9.5 8.3 Q14 7.4 23 9.3 Z" fill="#fff"/></svg>
<div style="left:1284px;top:307px;width:1px;height:23px;background:#b4b4b4"></div>
<div style="left:1678px;top:307px;width:1px;height:23px;background:#b4b4b4"></div>
<div style="left:1284px;top:318px;width:395px;height:1px;background:#b4b4b4"></div>
<div style="left:1284px;top:329px;width:395px;height:1px;background:#b4b4b4"></div>
<span class="t" style="left:1288.8px;top:308.5px;height:10px;line-height:10px;font-size:7px;color:#000;letter-spacing:0.072px;font-weight:bold;">Certifico S.r.l.</span>
<span class="t" style="left:1288.8px;top:319.0px;height:9px;line-height:9px;font-size:6.6px;color:#000;letter-spacing:0.012px;font-weight:normal;">Str. del Piano,29 - 06135 Ponte San Giovanni PG</span>
<span class="t" style="left:1288.8px;top:331.2px;height:6px;line-height:6px;font-size:4.6px;color:#000;letter-spacing:0.277px;font-weight:normal;">www.certifico.com</span>
<span class="t" style="left:1275.5px;width:400px;text-align:right;top:308.5px;height:10px;line-height:10px;font-size:7px;color:#000;letter-spacing:-0.1px;font-weight:normal;"><b>Tel.</b> +39 075 599 73 63</span>
<span class="t" style="left:1275.5px;width:400px;text-align:right;top:318.5px;height:10px;line-height:10px;font-size:7px;color:#000;letter-spacing:-0.1px;font-weight:normal;"><b>Fax.</b> +39 075 599 73 43</span>
<span class="t" style="left:1275.5px;width:400px;text-align:right;top:330.2px;height:7px;line-height:7px;font-size:4.8px;color:#000;letter-spacing:0.098px;font-weight:normal;">info@certifico.com</span>
<span class="t" style="left:1611px;top:337.5px;height:10px;line-height:10px;font-size:7px;color:#000;letter-spacing:0px;font-weight:bold;">A</span>
<span class="t" style="left:1622px;top:337.5px;height:10px;line-height:10px;font-size:7px;color:#000;letter-spacing:0px;font-weight:bold;">C</span>
<span class="t" style="left:1633px;top:337.0px;height:10px;line-height:10px;font-size:6.8px;color:#000;letter-spacing:-0.172px;font-weight:bold;">PASS</span>
<div style="left:1282px;top:346px;width:1px;height:13px;background:#999"></div>
<div style="left:1282px;top:358px;width:371px;height:1px;background:#b0b0b0"></div>
<span class="t" style="left:1284.4px;top:344.5px;height:14px;line-height:14px;font-size:9.8px;color:#000;letter-spacing:-0.096px;font-weight:bold;">1 Requisiti essenziali di sicurezza e di tutela della salute</span>
<div style="left:1659px;top:346px;width:21px;height:248px;border:1px solid #bcbcbc;box-sizing:border-box;background:#fff"></div>
<div style="left:1659px;top:346px;width:1px;height:573px;background:#bcbcbc"></div>
<span class="t" style="left:1598px;top:462.5px;width:140px;height:14px;line-height:14px;font-size:12px;color:#c6c6c6;letter-spacing:0.55px;text-align:center;transform:rotate(-90deg);transform-origin:50% 50%;">RA Complete Summary</span>
<span class="t" style="left:1301.2px;top:357.8px;height:11px;line-height:11px;font-size:8.1px;color:#000;letter-spacing:0.046px;font-weight:bold;">1.1 Considerazioni generali</span>
<div style="left:1235px;top:371px;width:424px;height:92px;background:#ff8080"></div>
<span class="t" style="left:1311.6px;top:370.9px;height:11px;line-height:11px;font-size:7.8px;color:#000;letter-spacing:-0.08px;font-weight:normal;">1.1.1 Definizioni</span>
<svg style="left:1609.7px;top:371.79999999999995px" width="9" height="9" viewBox="0 0 9 9"><circle cx="4.5" cy="4.5" r="4.3" fill="#222"/><text x="4.5" y="7.3" font-size="7.5" font-weight="bold" fill="#fff" text-anchor="middle" font-family="Liberation Sans">?</text></svg>
<span class="t" style="left:1635.7px;top:372.09999999999997px;height:10px;line-height:10px;font-size:7.4px;color:#000;letter-spacing:0.206px;font-weight:bold;">NO</span>
<span class="t" style="left:1311.6px;top:382.0px;height:11px;line-height:11px;font-size:7.8px;color:#000;letter-spacing:0.01px;font-weight:normal;">1.1.2 Principi d'integrazione della sicurezza</span>
<svg style="left:1609.7px;top:382.9px" width="9" height="9" viewBox="0 0 9 9"><circle cx="4.5" cy="4.5" r="4.3" fill="#222"/><text x="4.5" y="7.3" font-size="7.5" font-weight="bold" fill="#fff" text-anchor="middle" font-family="Liberation Sans">?</text></svg>
<span class="t" style="left:1635.7px;top:383.2px;height:10px;line-height:10px;font-size:7.4px;color:#000;letter-spacing:0.206px;font-weight:bold;">NO</span>
<span class="t" style="left:1311.6px;top:393.5px;height:11px;line-height:11px;font-size:7.8px;color:#000;letter-spacing:0.07px;font-weight:normal;">1.1.3 Materiali e prodotti</span>
<svg style="left:1609.7px;top:394.4px" width="9" height="9" viewBox="0 0 9 9"><circle cx="4.5" cy="4.5" r="4.3" fill="#222"/><text x="4.5" y="7.3" font-size="7.5" font-weight="bold" fill="#fff" text-anchor="middle" font-family="Liberation Sans">?</text></svg>
<span class="t" style="left:1635.7px;top:394.7px;height:10px;line-height:10px;font-size:7.4px;color:#000;letter-spacing:0.206px;font-weight:bold;">NO</span>
<span class="t" style="left:1311.6px;top:404.7px;height:11px;line-height:11px;font-size:7.8px;color:#000;letter-spacing:-0.023px;font-weight:normal;">1.1.4 Illuminazione</span>
<svg style="left:1609.7px;top:405.59999999999997px" width="9" height="9" viewBox="0 0 9 9"><circle cx="4.5" cy="4.5" r="4.3" fill="#222"/><text x="4.5" y="7.3" font-size="7.5" font-weight="bold" fill="#fff" text-anchor="middle" font-family="Liberation Sans">?</text></svg>
<span class="t" style="left:1635.7px;top:405.9px;height:10px;line-height:10px;font-size:7.4px;color:#000;letter-spacing:0.206px;font-weight:bold;">NO</span>
<span class="t" style="left:1311.6px;top:416.7px;height:11px;line-height:11px;font-size:7.8px;color:#000;letter-spacing:0.056px;font-weight:normal;">1.1.5 Progettazione della macchina ai fini della movimentazione</span>
<svg style="left:1609.7px;top:417.59999999999997px" width="9" height="9" viewBox="0 0 9 9"><circle cx="4.5" cy="4.5" r="4.3" fill="#222"/><text x="4.5" y="7.3" font-size="7.5" font-weight="bold" fill="#fff" text-anchor="middle" font-family="Liberation Sans">?</text></svg>
<span class="t" style="left:1635.7px;top:417.9px;height:10px;line-height:10px;font-size:7.4px;color:#000;letter-spacing:0.206px;font-weight:bold;">NO</span>
<span class="t" style="left:1311.6px;top:427.9px;height:11px;line-height:11px;font-size:7.8px;color:#000;letter-spacing:-0.18px;font-weight:normal;">1.1.6 Ergonomia</span>
<svg style="left:1609.7px;top:428.79999999999995px" width="9" height="9" viewBox="0 0 9 9"><circle cx="4.5" cy="4.5" r="4.3" fill="#222"/><text x="4.5" y="7.3" font-size="7.5" font-weight="bold" fill="#fff" text-anchor="middle" font-family="Liberation Sans">?</text></svg>
<span class="t" style="left:1635.7px;top:429.09999999999997px;height:10px;line-height:10px;font-size:7.4px;color:#000;letter-spacing:0.206px;font-weight:bold;">NO</span>
<span class="t" style="left:1311.6px;top:439.7px;height:11px;line-height:11px;font-size:7.8px;color:#000;letter-spacing:0.026px;font-weight:normal;">1.1.7 Posti di lavoro</span>
<svg style="left:1609.7px;top:440.59999999999997px" width="9" height="9" viewBox="0 0 9 9"><circle cx="4.5" cy="4.5" r="4.3" fill="#222"/><text x="4.5" y="7.3" font-size="7.5" font-weight="bold" fill="#fff" text-anchor="middle" font-family="Liberation Sans">?</text></svg>
<span class="t" style="left:1635.7px;top:440.9px;height:10px;line-height:10px;font-size:7.4px;color:#000;letter-spacing:0.206px;font-weight:bold;">NO</span>
<span class="t" style="left:1311.6px;top:451.6px;height:11px;line-height:11px;font-size:7.8px;color:#000;letter-spacing:-0.189px;font-weight:normal;">1.1.8 Sedili</span>
<svg style="left:1609.7px;top:452.5px" width="9" height="9" viewBox="0 0 9 9"><circle cx="4.5" cy="4.5" r="4.3" fill="#222"/><text x="4.5" y="7.3" font-size="7.5" font-weight="bold" fill="#fff" text-anchor="middle" font-family="Liberation Sans">?</text></svg>
<span class="t" style="left:1635.7px;top:452.8px;height:10px;line-height:10px;font-size:7.4px;color:#000;letter-spacing:0.206px;font-weight:bold;">NO</span>
<span class="t" style="left:1301.2px;top:461.7px;height:11px;line-height:11px;font-size:8.1px;color:#000;letter-spacing:0.092px;font-weight:bold;">1.2 Sistemi di comando</span>
<div style="left:1235px;top:474px;width:424px;height:35px;background:#ff8080"></div>
<span class="t" style="left:1311.6px;top:474.8px;height:11px;line-height:11px;font-size:7.8px;color:#000;letter-spacing:0.091px;font-weight:normal;">1.2.1 Sicurezza ed affidabilità dei sistemi di comando</span>
<svg style="left:1609.7px;top:475.7px" width="9" height="9" viewBox="0 0 9 9"><circle cx="4.5" cy="4.5" r="4.3" fill="#222"/><text x="4.5" y="7.3" font-size="7.5" font-weight="bold" fill="#fff" text-anchor="middle" font-family="Liberation Sans">?</text></svg>
<span class="t" style="left:1635.7px;top:476.0px;height:10px;line-height:10px;font-size:7.4px;color:#000;letter-spacing:0.206px;font-weight:bold;">NO</span>
<span class="t" style="left:1311.6px;top:486.0px;height:11px;line-height:11px;font-size:7.8px;color:#000;letter-spacing:0.023px;font-weight:normal;">1.2.2 Dispositivi di comando</span>
<svg style="left:1609.7px;top:486.9px" width="9" height="9" viewBox="0 0 9 9"><circle cx="4.5" cy="4.5" r="4.3" fill="#222"/><text x="4.5" y="7.3" font-size="7.5" font-weight="bold" fill="#fff" text-anchor="middle" font-family="Liberation Sans">?</text></svg>
<span class="t" style="left:1635.7px;top:487.2px;height:10px;line-height:10px;font-size:7.4px;color:#000;letter-spacing:0.206px;font-weight:bold;">NO</span>
<span class="t" style="left:1311.6px;top:497.7px;height:11px;line-height:11px;font-size:7.8px;color:#000;letter-spacing:0.015px;font-weight:normal;">1.2.3 Avviamento</span>
<svg style="left:1609.7px;top:498.59999999999997px" width="9" height="9" viewBox="0 0 9 9"><circle cx="4.5" cy="4.5" r="4.3" fill="#222"/><text x="4.5" y="7.3" font-size="7.5" font-weight="bold" fill="#fff" text-anchor="middle" font-family="Liberation Sans">?</text></svg>
<span class="t" style="left:1635.7px;top:498.9px;height:10px;line-height:10px;font-size:7.4px;color:#000;letter-spacing:0.206px;font-weight:bold;">NO</span>
<span class="t" style="left:1301.2px;top:507.79999999999995px;height:11px;line-height:11px;font-size:8.1px;color:#000;letter-spacing:0.171px;font-weight:bold;">1.2.4 Arresto</span>
<div style="left:1235px;top:520px;width:424px;height:70px;background:#ff8080"></div>
<span class="t" style="left:1311.6px;top:520.6px;height:11px;line-height:11px;font-size:7.8px;color:#000;letter-spacing:0.021px;font-weight:normal;">1.2.4.1 Arresto normale</span>
<svg style="left:1609.7px;top:521.5px" width="9" height="9" viewBox="0 0 9 9"><circle cx="4.5" cy="4.5" r="4.3" fill="#222"/><text x="4.5" y="7.3" font-size="7.5" font-weight="bold" fill="#fff" text-anchor="middle" font-family="Liberation Sans">?</text></svg>
<span class="t" style="left:1635.7px;top:521.8000000000001px;height:10px;line-height:10px;font-size:7.4px;color:#000;letter-spacing:0.206px;font-weight:bold;">NO</span>
<span class="t" style="left:1311.6px;top:531.8px;height:11px;line-height:11px;font-size:7.8px;color:#000;letter-spacing:0.039px;font-weight:normal;">1.2.4.2 Arresto operativo</span>
<svg style="left:1609.7px;top:532.6999999999999px" width="9" height="9" viewBox="0 0 9 9"><circle cx="4.5" cy="4.5" r="4.3" fill="#222"/><text x="4.5" y="7.3" font-size="7.5" font-weight="bold" fill="#fff" text-anchor="middle" font-family="Liberation Sans">?</text></svg>
<span class="t" style="left:1635.7px;top:533.0px;height:10px;line-height:10px;font-size:7.4px;color:#000;letter-spacing:0.206px;font-weight:bold;">NO</span>
<span class="t" style="left:1311.6px;top:543.8px;height:11px;line-height:11px;font-size:7.8px;color:#000;letter-spacing:0.025px;font-weight:normal;">1.2.4.3 Arresto di emergenza</span>
<svg style="left:1609.7px;top:544.6999999999999px" width="9" height="9" viewBox="0 0 9 9"><circle cx="4.5" cy="4.5" r="4.3" fill="#222"/><text x="4.5" y="7.3" font-size="7.5" font-weight="bold" fill="#fff" text-anchor="middle" font-family="Liberation Sans">?</text></svg>
<span class="t" style="left:1635.7px;top:545.0px;height:10px;line-height:10px;font-size:7.4px;color:#000;letter-spacing:0.206px;font-weight:bold;">NO</span>
<span class="t" style="left:1311.6px;top:555.0px;height:11px;line-height:11px;font-size:7.8px;color:#000;letter-spacing:0.0px;font-weight:normal;">1.2.4.4 Assemblaggi di macchine</span>
<svg style="left:1609.7px;top:555.9px" width="9" height="9" viewBox="0 0 9 9"><circle cx="4.5" cy="4.5" r="4.3" fill="#222"/><text x="4.5" y="7.3" font-size="7.5" font-weight="bold" fill="#fff" text-anchor="middle" font-family="Liberation Sans">?</text></svg>
<span class="t" style="left:1635.7px;top:556.2px;height:10px;line-height:10px;font-size:7.4px;color:#000;letter-spacing:0.206px;font-weight:bold;">NO</span>
<span class="t" style="left:1311.6px;top:566.7px;height:11px;line-height:11px;font-size:7.8px;color:#000;letter-spacing:0.047px;font-weight:normal;">1.2.5 Selezione del modo di comando o di funzionamento</span>
<svg style="left:1609.7px;top:567.6px" width="9" height="9" viewBox="0 0 9 9"><circle cx="4.5" cy="4.5" r="4.3" fill="#222"/><text x="4.5" y="7.3" font-size="7.5" font-weight="bold" fill="#fff" text-anchor="middle" font-family="Liberation Sans">?</text></svg>
<span class="t" style="left:1635.7px;top:567.9000000000001px;height:10px;line-height:10px;font-size:7.4px;color:#000;letter-spacing:0.206px;font-weight:bold;">NO</span>
<span class="t" style="left:1311.6px;top:577.9px;height:11px;line-height:11px;font-size:7.8px;color:#000;letter-spacing:0.054px;font-weight:normal;">1.2.6 Guasto del circuito di alimentazione di energia</span>
<svg style="left:1609.7px;top:578.8px" width="9" height="9" viewBox="0 0 9 9"><circle cx="4.5" cy="4.5" r="4.3" fill="#222"/><text x="4.5" y="7.3" font-size="7.5" font-weight="bold" fill="#fff" text-anchor="middle" font-family="Liberation Sans">?</text></svg>
<span class="t" style="left:1635.7px;top:579.1px;height:10px;line-height:10px;font-size:7.4px;color:#000;letter-spacing:0.206px;font-weight:bold;">NO</span>
<span class="t" style="left:1301.2px;top:588.8px;height:11px;line-height:11px;font-size:8.1px;color:#000;letter-spacing:0.128px;font-weight:bold;">1.3 Misure di protezione contro i pericoli meccanici</span>
<div style="left:1235px;top:601px;width:445px;height:81px;background:#ff8080"></div>
<span class="t" style="left:1311.6px;top:600.6px;height:11px;line-height:11px;font-size:7.8px;color:#000;letter-spacing:0.101px;font-weight:normal;">1.3.1 Rischio di perdita di stabilità</span>
<svg style="left:1609.7px;top:601.5px" width="9" height="9" viewBox="0 0 9 9"><circle cx="4.5" cy="4.5" r="4.3" fill="#222"/><text x="4.5" y="7.3" font-size="7.5" font-weight="bold" fill="#fff" text-anchor="middle" font-family="Liberation Sans">?</text></svg>
<span class="t" style="left:1635.7px;top:601.8000000000001px;height:10px;line-height:10px;font-size:7.4px;color:#000;letter-spacing:0.206px;font-weight:bold;">NO</span>
<span class="t" style="left:1311.6px;top:612.6px;height:11px;line-height:11px;font-size:7.8px;color:#000;letter-spacing:0.092px;font-weight:normal;">1.3.2 Rischio di rottura durante il funzionamento</span>
<svg style="left:1609.7px;top:613.5px" width="9" height="9" viewBox="0 0 9 9"><circle cx="4.5" cy="4.5" r="4.3" fill="#222"/><text x="4.5" y="7.3" font-size="7.5" font-weight="bold" fill="#fff" text-anchor="middle" font-family="Liberation Sans">?</text></svg>
<span class="t" style="left:1635.7px;top:613.8000000000001px;height:10px;line-height:10px;font-size:7.4px;color:#000;letter-spacing:0.206px;font-weight:bold;">NO</span>
<span class="t" style="left:1311.6px;top:623.8px;height:11px;line-height:11px;font-size:7.8px;color:#000;letter-spacing:0.07px;font-weight:normal;">1.3.3 Rischi dovuti alla caduta o alla proiezione di oggetti</span>
<svg style="left:1609.7px;top:624.6999999999999px" width="9" height="9" viewBox="0 0 9 9"><circle cx="4.5" cy="4.5" r="4.3" fill="#222"/><text x="4.5" y="7.3" font-size="7.5" font-weight="bold" fill="#fff" text-anchor="middle" font-family="Liberation Sans">?</text></svg>
<span class="t" style="left:1635.7px;top:625.0px;height:10px;line-height:10px;font-size:7.4px;color:#000;letter-spacing:0.206px;font-weight:bold;">NO</span>
<span class="t" style="left:1311.6px;top:635.8px;height:11px;line-height:11px;font-size:7.8px;color:#000;letter-spacing:0.06px;font-weight:normal;">1.3.4 Rischi dovuti a superfici, spigoli od angoli</span>
<svg style="left:1609.7px;top:636.6999999999999px" width="9" height="9" viewBox="0 0 9 9"><circle cx="4.5" cy="4.5" r="4.3" fill="#222"/><text x="4.5" y="7.3" font-size="7.5" font-weight="bold" fill="#fff" text-anchor="middle" font-family="Liberation Sans">?</text></svg>
<span class="t" style="left:1635.7px;top:637.0px;height:10px;line-height:10px;font-size:7.4px;color:#000;letter-spacing:0.206px;font-weight:bold;">NO</span>
<span class="t" style="left:1311.6px;top:647.8px;height:11px;line-height:11px;font-size:7.8px;color:#000;letter-spacing:0.046px;font-weight:normal;">1.3.5 Rischi dovuti alle macchine combinate</span>
<svg style="left:1609.7px;top:648.6999999999999px" width="9" height="9" viewBox="0 0 9 9"><circle cx="4.5" cy="4.5" r="4.3" fill="#222"/><text x="4.5" y="7.3" font-size="7.5" font-weight="bold" fill="#fff" text-anchor="middle" font-family="Liberation Sans">?</text></svg>
<span class="t" style="left:1635.7px;top:649.0px;height:10px;line-height:10px;font-size:7.4px;color:#000;letter-spacing:0.206px;font-weight:bold;">NO</span>
<span class="t" style="left:1311.6px;top:658.7px;height:11px;line-height:11px;font-size:7.8px;color:#000;letter-spacing:0.041px;font-weight:normal;">1.3.6 Rischi connessi alle variazioni delle condizioni di funzionamento</span>
<svg style="left:1609.7px;top:659.6px" width="9" height="9" viewBox="0 0 9 9"><circle cx="4.5" cy="4.5" r="4.3" fill="#222"/><text x="4.5" y="7.3" font-size="7.5" font-weight="bold" fill="#fff" text-anchor="middle" font-family="Liberation Sans">?</text></svg>
<span class="t" style="left:1635.7px;top:659.9000000000001px;height:10px;line-height:10px;font-size:7.4px;color:#000;letter-spacing:0.206px;font-weight:bold;">NO</span>
<span class="t" style="left:1311.6px;top:670.7px;height:11px;line-height:11px;font-size:7.8px;color:#000;letter-spacing:0.082px;font-weight:normal;">1.3.7 Rischi dovuti agli elementi mobili</span>
<svg style="left:1609.7px;top:671.6px" width="9" height="9" viewBox="0 0 9 9"><circle cx="4.5" cy="4.5" r="4.3" fill="#222"/><text x="4.5" y="7.3" font-size="7.5" font-weight="bold" fill="#fff" text-anchor="middle" font-family="Liberation Sans">?</text></svg>
<span class="t" style="left:1635.7px;top:671.9000000000001px;height:10px;line-height:10px;font-size:7.4px;color:#000;letter-spacing:0.206px;font-weight:bold;">NO</span>
<span class="t" style="left:1301.2px;top:680.9px;height:11px;line-height:11px;font-size:8.1px;color:#000;letter-spacing:0.203px;font-weight:bold;">1.3.8 Scelta di una protezione contro i rischi dovuti agli elementi mobili</span>
<div style="left:1235px;top:693px;width:445px;height:34.5px;background:#ff8080"></div>
<span class="t" style="left:1311.6px;top:693.6px;height:11px;line-height:11px;font-size:7.8px;color:#000;letter-spacing:0.075px;font-weight:normal;">1.3.8.1 Elementi mobili di trasmissione</span>
<svg style="left:1609.7px;top:694.5px" width="9" height="9" viewBox="0 0 9 9"><circle cx="4.5" cy="4.5" r="4.3" fill="#222"/><text x="4.5" y="7.3" font-size="7.5" font-weight="bold" fill="#fff" text-anchor="middle" font-family="Liberation Sans">?</text></svg>
<span class="t" style="left:1635.7px;top:694.8000000000001px;height:10px;line-height:10px;font-size:7.4px;color:#000;letter-spacing:0.206px;font-weight:bold;">NO</span>
<span class="t" style="left:1311.6px;top:704.8px;height:11px;line-height:11px;font-size:7.8px;color:#000;letter-spacing:0.035px;font-weight:normal;">1.3.8.2 Elementi mobili che partecipano alla lavorazione</span>
<svg style="left:1609.7px;top:705.6999999999999px" width="9" height="9" viewBox="0 0 9 9"><circle cx="4.5" cy="4.5" r="4.3" fill="#222"/><text x="4.5" y="7.3" font-size="7.5" font-weight="bold" fill="#fff" text-anchor="middle" font-family="Liberation Sans">?</text></svg>
<span class="t" style="left:1635.7px;top:706.0px;height:10px;line-height:10px;font-size:7.4px;color:#000;letter-spacing:0.206px;font-weight:bold;">NO</span>
<span class="t" style="left:1311.6px;top:716.5px;height:11px;line-height:11px;font-size:7.8px;color:#000;letter-spacing:0.119px;font-weight:normal;">1.3.9 Rischi di movimenti incontrollati</span>
<svg style="left:1609.7px;top:717.4px" width="9" height="9" viewBox="0 0 9 9"><circle cx="4.5" cy="4.5" r="4.3" fill="#222"/><text x="4.5" y="7.3" font-size="7.5" font-weight="bold" fill="#fff" text-anchor="middle" font-family="Liberation Sans">?</text></svg>
<span class="t" style="left:1635.7px;top:717.7px;height:10px;line-height:10px;font-size:7.4px;color:#000;letter-spacing:0.206px;font-weight:bold;">NO</span>
<span class="t" style="left:1301.2px;top:726.7px;height:11px;line-height:11px;font-size:8.1px;color:#000;letter-spacing:0.177px;font-weight:bold;">1.4 Caratteristiche richieste per i ripari ed i dispositivi di protezione</span>
<div style="left:1235px;top:739px;width:445px;height:12px;background:#ff8080"></div>
<span class="t" style="left:1311.6px;top:739.7px;height:11px;line-height:11px;font-size:7.8px;color:#000;letter-spacing:-0.032px;font-weight:normal;">1.4.1 Requisiti generali</span>
<svg style="left:1609.7px;top:740.6px" width="9" height="9" viewBox="0 0 9 9"><circle cx="4.5" cy="4.5" r="4.3" fill="#222"/><text x="4.5" y="7.3" font-size="7.5" font-weight="bold" fill="#fff" text-anchor="middle" font-family="Liberation Sans">?</text></svg>
<span class="t" style="left:1635.7px;top:740.9000000000001px;height:10px;line-height:10px;font-size:7.4px;color:#000;letter-spacing:0.206px;font-weight:bold;">NO</span>
<span class="t" style="left:1301.2px;top:749.6px;height:11px;line-height:11px;font-size:8.1px;color:#000;letter-spacing:0.129px;font-weight:bold;">1.4.2 Requisiti particolari per i ripari</span>
<div style="left:1235px;top:762px;width:445px;height:47px;background:#ff8080"></div>
<span class="t" style="left:1311.6px;top:761.8px;height:11px;line-height:11px;font-size:7.8px;color:#000;letter-spacing:0.028px;font-weight:normal;">1.4.2.1 Ripari fissi</span>
<svg style="left:1609.7px;top:762.6999999999999px" width="9" height="9" viewBox="0 0 9 9"><circle cx="4.5" cy="4.5" r="4.3" fill="#222"/><text x="4.5" y="7.3" font-size="7.5" font-weight="bold" fill="#fff" text-anchor="middle" font-family="Liberation Sans">?</text></svg>
<span class="t" style="left:1635.7px;top:763.0px;height:10px;line-height:10px;font-size:7.4px;color:#000;letter-spacing:0.206px;font-weight:bold;">NO</span>
<span class="t" style="left:1311.6px;top:773.6px;height:11px;line-height:11px;font-size:7.8px;color:#000;letter-spacing:0.056px;font-weight:normal;">1.4.2.2 Ripari mobili interbloccati</span>
<svg style="left:1609.7px;top:774.5px" width="9" height="9" viewBox="0 0 9 9"><circle cx="4.5" cy="4.5" r="4.3" fill="#222"/><text x="4.5" y="7.3" font-size="7.5" font-weight="bold" fill="#fff" text-anchor="middle" font-family="Liberation Sans">?</text></svg>
<span class="t" style="left:1635.7px;top:774.8000000000001px;height:10px;line-height:10px;font-size:7.4px;color:#000;letter-spacing:0.206px;font-weight:bold;">NO</span>
<span class="t" style="left:1311.6px;top:785.5px;height:11px;line-height:11px;font-size:7.8px;color:#000;letter-spacing:0.044px;font-weight:normal;">1.4.2.3 Ripari regolabili che limitano l'accesso</span>
<svg style="left:1609.7px;top:786.4px" width="9" height="9" viewBox="0 0 9 9"><circle cx="4.5" cy="4.5" r="4.3" fill="#222"/><text x="4.5" y="7.3" font-size="7.5" font-weight="bold" fill="#fff" text-anchor="middle" font-family="Liberation Sans">?</text></svg>
<span class="t" style="left:1635.7px;top:786.7px;height:10px;line-height:10px;font-size:7.4px;color:#000;letter-spacing:0.206px;font-weight:bold;">NO</span>
<span class="t" style="left:1311.6px;top:796.7px;height:11px;line-height:11px;font-size:7.8px;color:#000;letter-spacing:0.11px;font-weight:normal;">1.4.3 Requisiti particolari per i dispositivi di protezione</span>
<svg style="left:1609.7px;top:797.6px" width="9" height="9" viewBox="0 0 9 9"><circle cx="4.5" cy="4.5" r="4.3" fill="#222"/><text x="4.5" y="7.3" font-size="7.5" font-weight="bold" fill="#fff" text-anchor="middle" font-family="Liberation Sans">?</text></svg>
<span class="t" style="left:1635.7px;top:797.9000000000001px;height:10px;line-height:10px;font-size:7.4px;color:#000;letter-spacing:0.206px;font-weight:bold;">NO</span>
<span class="t" style="left:1301.2px;top:807.7px;height:11px;line-height:11px;font-size:8.1px;color:#000;letter-spacing:0.064px;font-weight:bold;">1.5 Rischi dovuti ad altri pericoli</span>
<div style="left:1235px;top:820px;width:445px;height:23px;background:#ff8080"></div>
<span class="t" style="left:1311.6px;top:819.7px;height:11px;line-height:11px;font-size:7.8px;color:#000;letter-spacing:-0.016px;font-weight:normal;">1.5.1 Energia elettrica</span>
<svg style="left:1609.7px;top:820.6px" width="9" height="9" viewBox="0 0 9 9"><circle cx="4.5" cy="4.5" r="4.3" fill="#222"/><text x="4.5" y="7.3" font-size="7.5" font-weight="bold" fill="#fff" text-anchor="middle" font-family="Liberation Sans">?</text></svg>
<span class="t" style="left:1635.7px;top:820.9000000000001px;height:10px;line-height:10px;font-size:7.4px;color:#000;letter-spacing:0.206px;font-weight:bold;">NO</span>
<span class="t" style="left:1311.6px;top:831.4px;height:11px;line-height:11px;font-size:7.8px;color:#000;letter-spacing:0.13px;font-weight:normal;">1.5.2 Elettricità statica</span>
<svg style="left:1609.7px;top:832.3px" width="9" height="9" viewBox="0 0 9 9"><circle cx="4.5" cy="4.5" r="4.3" fill="#222"/><text x="4.5" y="7.3" font-size="7.5" font-weight="bold" fill="#fff" text-anchor="middle" font-family="Liberation Sans">?</text></svg>
<span class="t" style="left:1635.7px;top:832.6px;height:10px;line-height:10px;font-size:7.4px;color:#000;letter-spacing:0.206px;font-weight:bold;">NO</span>
<div style="left:1659px;top:594px;width:1px;height:325px;background:rgba(90,90,90,0.38)"></div>
<span class="t" style="left:1284.2px;top:848.5px;height:10px;line-height:10px;font-size:7px;color:#000;letter-spacing:0.01px;font-weight:bold;">Status table</span>
<div style="left:1284.3px;top:860.3px;width:221.7px;height:56.2px;border:1.6px solid #bdbdbd;box-sizing:border-box"></div>
<div style="left:1285px;top:868.8px;width:220px;height:1.3px;background:#bdbdbd"></div>
<div style="left:1296px;top:861px;width:1.3px;height:55px;background:#bdbdbd"></div>
<div style="left:1361px;top:861px;width:1.3px;height:55px;background:#bdbdbd"></div>
<div style="left:1427px;top:861px;width:1.3px;height:55px;background:#bdbdbd"></div>
<span class="t" style="left:1228.5px;width:200px;text-align:center;top:861.3px;height:10px;line-height:10px;font-size:6.8px;color:#000;letter-spacing:0.015px;font-weight:bold;">Applicability</span>
<span class="t" style="left:1294.4px;width:200px;text-align:center;top:861.3px;height:10px;line-height:10px;font-size:6.8px;color:#000;letter-spacing:0.05px;font-weight:bold;">Conformity</span>
<span class="t" style="left:1365.2px;width:200px;text-align:center;top:861.3px;height:10px;line-height:10px;font-size:6.8px;color:#000;letter-spacing:0.073px;font-weight:bold;">RA Card Pass (1)</span>
<span class="t" style="left:1287px;top:871.1px;height:7px;line-height:7px;font-size:5.2px;color:#000;letter-spacing:0px;font-weight:normal;">01</span>
<svg style="left:1300px;top:872.2px" width="6" height="6" viewBox="0 0 6 6"><circle cx="3" cy="3" r="3" fill="#222"/><text x="3" y="4.8" font-size="4.6" font-weight="bold" fill="#fff" text-anchor="middle" font-family="Liberation Sans">×</text></svg>
<span class="t" style="left:1309px;top:870.6px;height:8px;line-height:8px;font-size:5.7px;color:#000;letter-spacing:-0.02px;font-weight:normal;">Not applicable</span>
<span class="t" style="left:1375px;top:870.6px;height:8px;line-height:8px;font-size:5.7px;color:#000;letter-spacing:-0.02px;font-weight:normal;">Not to establish</span>
<span class="t" style="left:1365.2px;width:200px;text-align:center;top:870.6px;height:8px;line-height:8px;font-size:5.4px;color:#000;letter-spacing:0px;font-weight:normal;">OK</span>
<span class="t" style="left:1287px;top:878.4px;height:7px;line-height:7px;font-size:5.2px;color:#000;letter-spacing:0px;font-weight:normal;">02</span>
<svg style="left:1300px;top:879.5px" width="6" height="6" viewBox="0 0 6 6"><circle cx="3" cy="3" r="3" fill="#222"/><text x="3" y="4.8" font-size="4.6" font-weight="bold" fill="#fff" text-anchor="middle" font-family="Liberation Sans">✓</text></svg>
<span class="t" style="left:1309px;top:877.9px;height:8px;line-height:8px;font-size:5.7px;color:#000;letter-spacing:-0.02px;font-weight:normal;">Applicable</span>
<svg style="left:1367px;top:879.5px" width="6" height="6" viewBox="0 0 6 6"><circle cx="3" cy="3" r="3" fill="#222"/><text x="3" y="4.8" font-size="4.6" font-weight="bold" fill="#fff" text-anchor="middle" font-family="Liberation Sans">✓</text></svg>
<span class="t" style="left:1375px;top:877.9px;height:8px;line-height:8px;font-size:5.7px;color:#000;letter-spacing:-0.02px;font-weight:normal;">Comply</span>
<span class="t" style="left:1365.2px;width:200px;text-align:center;top:877.9px;height:8px;line-height:8px;font-size:5.4px;color:#000;letter-spacing:0px;font-weight:normal;">OK</span>
<span class="t" style="left:1287px;top:886.5px;height:7px;line-height:7px;font-size:5.2px;color:#000;letter-spacing:0px;font-weight:normal;">03</span>
<svg style="left:1300px;top:887.6px" width="6" height="6" viewBox="0 0 6 6"><circle cx="3" cy="3" r="3" fill="#222"/><text x="3" y="4.8" font-size="4.6" font-weight="bold" fill="#fff" text-anchor="middle" font-family="Liberation Sans">✓</text></svg>
<span class="t" style="left:1309px;top:886.0px;height:8px;line-height:8px;font-size:5.7px;color:#000;letter-spacing:-0.02px;font-weight:normal;">Applicable</span>
<svg style="left:1367px;top:887.6px" width="6" height="6" viewBox="0 0 6 6"><circle cx="3" cy="3" r="3" fill="#222"/><text x="3" y="4.8" font-size="4.6" font-weight="bold" fill="#fff" text-anchor="middle" font-family="Liberation Sans">×</text></svg>
<span class="t" style="left:1375px;top:886.0px;height:8px;line-height:8px;font-size:5.7px;color:#000;letter-spacing:-0.02px;font-weight:normal;">Not comply</span>
<span class="t" style="left:1365.2px;width:200px;text-align:center;top:886.0px;height:8px;line-height:8px;font-size:5.4px;color:#000;letter-spacing:0px;font-weight:bold;">NO</span>
<span class="t" style="left:1287px;top:894.3px;height:7px;line-height:7px;font-size:5.2px;color:#000;letter-spacing:0px;font-weight:normal;">04</span>
<svg style="left:1300px;top:895.4px" width="6" height="6" viewBox="0 0 6 6"><circle cx="3" cy="3" r="3" fill="#222"/><text x="3" y="4.8" font-size="4.6" font-weight="bold" fill="#fff" text-anchor="middle" font-family="Liberation Sans">✓</text></svg>
<span class="t" style="left:1309px;top:893.8px;height:8px;line-height:8px;font-size:5.7px;color:#000;letter-spacing:-0.02px;font-weight:normal;">Applicable</span>
<svg style="left:1367px;top:895.4px" width="6" height="6" viewBox="0 0 6 6"><circle cx="3" cy="3" r="3" fill="#222"/><text x="3" y="4.8" font-size="4.6" font-weight="bold" fill="#fff" text-anchor="middle" font-family="Liberation Sans">?</text></svg>
<span class="t" style="left:1375px;top:893.8px;height:8px;line-height:8px;font-size:5.7px;color:#000;letter-spacing:-0.02px;font-weight:normal;">Not established</span>
<span class="t" style="left:1365.2px;width:200px;text-align:center;top:893.8px;height:8px;line-height:8px;font-size:5.4px;color:#000;letter-spacing:0px;font-weight:bold;">NO</span>
<span class="t" style="left:1287px;top:903.4px;height:7px;line-height:7px;font-size:5.2px;color:#000;letter-spacing:0px;font-weight:normal;">05</span>
<svg style="left:1300px;top:904.5px" width="6" height="6" viewBox="0 0 6 6"><circle cx="3" cy="3" r="3" fill="#222"/><text x="3" y="4.8" font-size="4.6" font-weight="bold" fill="#fff" text-anchor="middle" font-family="Liberation Sans">?</text></svg>
<span class="t" style="left:1309px;top:902.9px;height:8px;line-height:8px;font-size:5.7px;color:#000;letter-spacing:-0.02px;font-weight:normal;">Not considered</span>
<span class="t" style="left:1375px;top:902.9px;height:8px;line-height:8px;font-size:5.7px;color:#000;letter-spacing:-0.02px;font-weight:normal;">No value</span>
<span class="t" style="left:1365.2px;width:200px;text-align:center;top:902.9px;height:8px;line-height:8px;font-size:5.4px;color:#000;letter-spacing:0px;font-weight:bold;">NO</span>
<span class="t" style="left:1507.6px;top:861.0px;height:8px;line-height:8px;font-size:5.75px;color:#000;letter-spacing:0px;font-weight:normal;">(1) The value "RA Card Pass" indicates, according to</span>
<span class="t" style="left:1507.6px;top:867.0px;height:8px;line-height:8px;font-size:5.75px;color:#000;letter-spacing:0px;font-weight:normal;">the Assessment status, whether the RA card is comply</span>
<span class="t" style="left:1507.6px;top:874.0px;height:8px;line-height:8px;font-size:5.75px;color:#000;letter-spacing:0px;font-weight:normal;">and if the requirement assessment is in compliance with</span>
<span class="t" style="left:1507.6px;top:880.8px;height:8px;line-height:8px;font-size:5.75px;color:#000;letter-spacing:0px;font-weight:normal;">rules.</span>
<span class="t" style="left:1287.6px;top:920.0px;height:6px;line-height:6px;font-size:4.4px;color:#000;letter-spacing:0px;font-weight:normal;">Project:</span>
<span class="t" style="left:1398px;top:920.0px;height:6px;line-height:6px;font-size:4.4px;color:#000;letter-spacing:0px;font-weight:normal;">Machinery:</span>
<svg style="left:1246px;top:927px" width="24" height="23" viewBox="0 0 24 23"><rect width="24" height="23" fill="#9d98fb"/><path d="M23 7 Q14 3.3 6 5.6 Q0.6 7.6 1 11.5 Q1.5 15.6 8 17.1 Q15 18.6 23 15.4 L23 13.8 Q13 15.6 8.5 14.2 Q5 13 5.2 11.2 Q5.5 9 9.5 8.3 Q14 7.4 23 9.3 Z" fill="#fff"/></svg>
<div style="left:1284.5px;top:927px;width:394.5px;height:24px;border:1px solid #c4c4c4;box-sizing:border-box"></div>
<div style="left:1285px;top:938.5px;width:393px;height:1px;background:#c4c4c4"></div>
<div style="left:1394px;top:927px;width:1px;height:24px;background:#c4c4c4"></div>
<span class="t" style="left:1287.6px;top:928.3px;height:10px;line-height:10px;font-size:6.8px;color:#000;letter-spacing:-0.017px;font-weight:normal;">Rettificatrici</span>
<span class="t" style="left:1290.2px;top:938.7px;height:10px;line-height:10px;font-size:6.8px;color:#000;letter-spacing:-0.055px;font-weight:normal;">Certifico S.r.l.</span>
<span class="t" style="left:1398px;top:927.5px;height:10px;line-height:10px;font-size:7px;color:#000;letter-spacing:0.046px;font-weight:bold;">Rettificatrice</span>
<span class="t" style="left:1276px;width:400px;text-align:right;top:928.0px;height:9px;line-height:9px;font-size:6.4px;color:#000;letter-spacing:0px;font-weight:normal;"><b>Anno:</b>&nbsp; 2016</span>
<span class="t" style="left:1398px;top:940.2px;height:9px;line-height:9px;font-size:6.4px;color:#000;letter-spacing:0px;font-weight:normal;"><b>Mod.:</b> 001</span>
<span class="t" style="left:1496px;top:940.2px;height:9px;line-height:9px;font-size:6.7px;color:#000;letter-spacing:0px;font-weight:normal;"><b>Matricola:</b> 001_2016</span>
<span class="t" style="left:1273px;width:400px;text-align:right;top:940.2px;height:9px;line-height:9px;font-size:6.4px;color:#000;letter-spacing:0px;font-weight:normal;"><b>Rev.:</b> 00</span>
</body></html>
